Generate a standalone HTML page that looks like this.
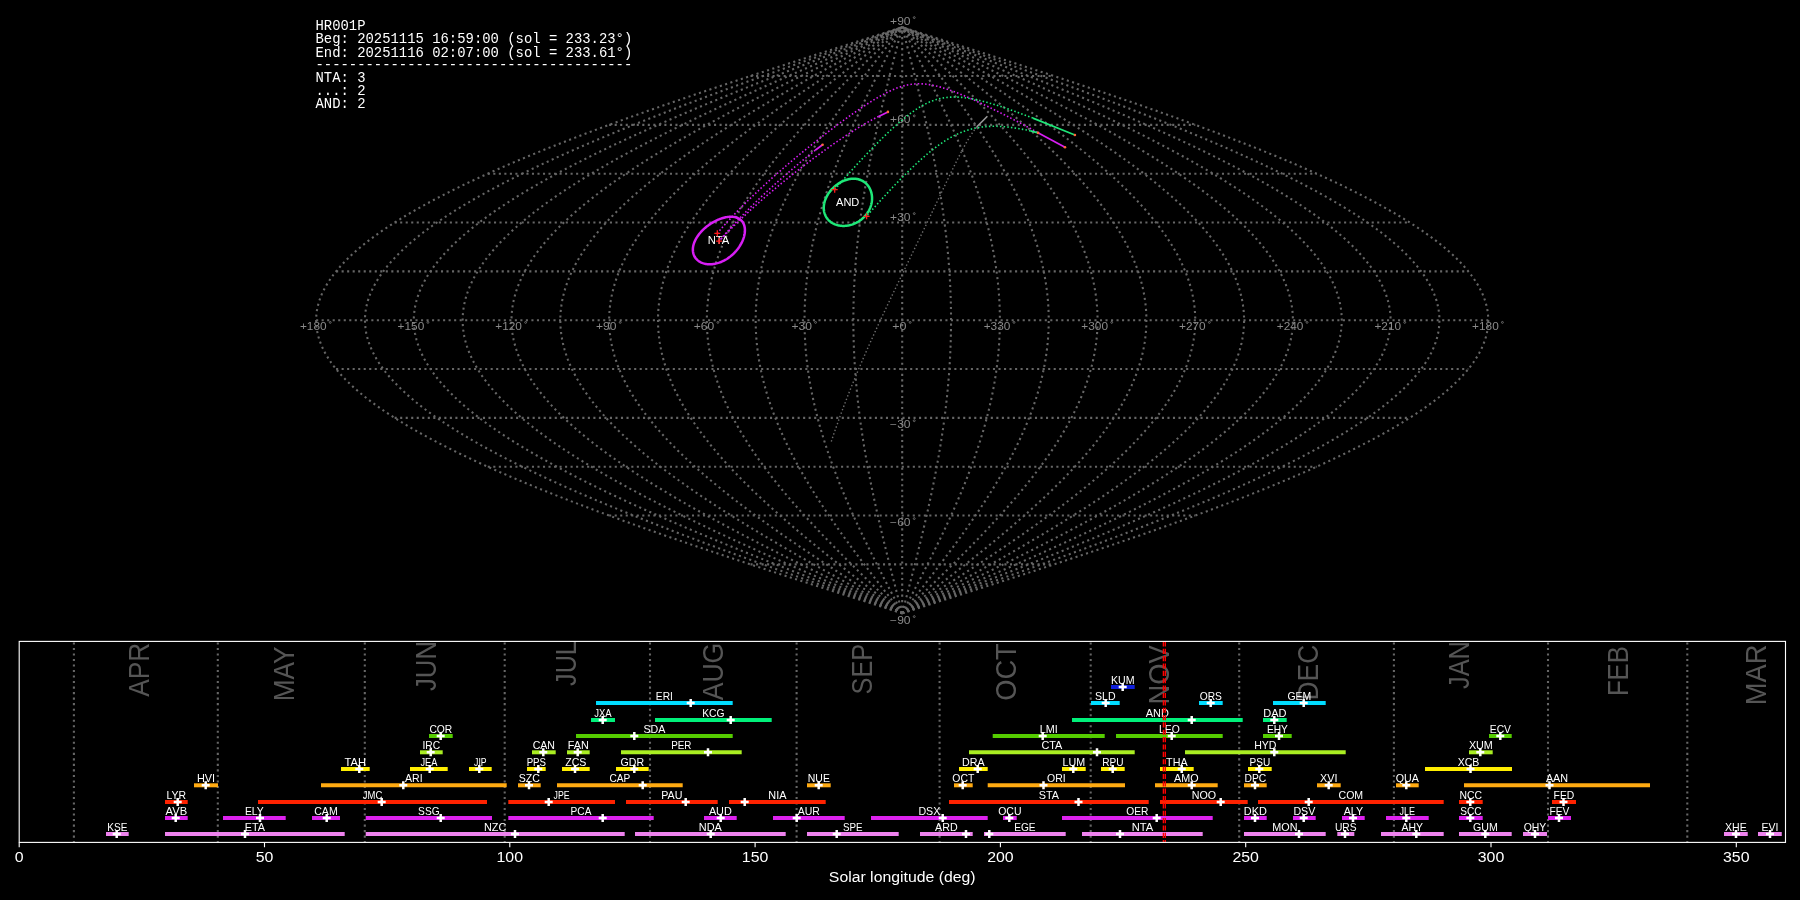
<!DOCTYPE html>
<html><head><meta charset="utf-8"><style>
html,body{margin:0;padding:0;background:#000;width:1800px;height:900px;overflow:hidden}
svg{display:block;will-change:transform}
</style></head><body>
<svg width="1800" height="900" viewBox="0 0 1800 900">
<rect width="1800" height="900" fill="#000"/>
<g fill="none" stroke="#666666" stroke-width="2.08" stroke-dasharray="2.08 3.44">
<path d="M750.51,564.40 L1053.89,564.40"/>
<path d="M609.16,515.56 L1195.24,515.56"/>
<path d="M487.78,466.72 L1316.62,466.72"/>
<path d="M394.64,417.88 L1409.76,417.88"/>
<path d="M336.09,369.04 L1468.31,369.04"/>
<path d="M316.12,320.20 L1488.28,320.20"/>
<path d="M336.09,271.36 L1468.31,271.36"/>
<path d="M394.64,222.52 L1409.76,222.52"/>
<path d="M487.78,173.68 L1316.62,173.68"/>
<path d="M609.16,124.84 L1195.24,124.84"/>
<path d="M750.51,76.00 L1053.89,76.00"/>
<path d="M902.20,613.24 L912.43,609.98 L922.65,606.73 L932.87,603.47 L943.08,600.22 L953.28,596.96 L963.46,593.70 L973.63,590.45 L983.77,587.19 L993.88,583.94 L1003.97,580.68 L1014.03,577.42 L1024.05,574.17 L1034.04,570.91 L1043.99,567.66 L1053.89,564.40 L1063.75,561.14 L1073.55,557.89 L1083.31,554.63 L1093.01,551.38 L1102.65,548.12 L1112.23,544.86 L1121.75,541.61 L1131.20,538.35 L1140.58,535.10 L1149.89,531.84 L1159.12,528.58 L1168.27,525.33 L1177.35,522.07 L1186.34,518.82 L1195.24,515.56 L1204.05,512.30 L1212.78,509.05 L1221.40,505.79 L1229.93,502.54 L1238.36,499.28 L1246.69,496.02 L1254.91,492.77 L1263.03,489.51 L1271.03,486.26 L1278.92,483.00 L1286.70,479.74 L1294.36,476.49 L1301.91,473.23 L1309.33,469.98 L1316.62,466.72 L1323.79,463.46 L1330.83,460.21 L1337.74,456.95 L1344.52,453.70 L1351.16,450.44 L1357.67,447.18 L1364.04,443.93 L1370.26,440.67 L1376.35,437.42 L1382.29,434.16 L1388.08,430.90 L1393.73,427.65 L1399.22,424.39 L1404.57,421.14 L1409.76,417.88 L1414.80,414.62 L1419.68,411.37 L1424.40,408.11 L1428.97,404.86 L1433.37,401.60 L1437.61,398.34 L1441.69,395.09 L1445.60,391.83 L1449.35,388.58 L1452.94,385.32 L1456.35,382.06 L1459.60,378.81 L1462.67,375.55 L1465.58,372.30 L1468.31,369.04 L1470.87,365.78 L1473.26,362.53 L1475.47,359.27 L1477.51,356.02 L1479.38,352.76 L1481.06,349.50 L1482.58,346.25 L1483.91,342.99 L1485.07,339.74 L1486.05,336.48 L1486.85,333.22 L1487.48,329.97 L1487.92,326.71 L1488.19,323.46 L1488.28,320.20 L1488.19,316.94 L1487.92,313.69 L1487.48,310.43 L1486.85,307.18 L1486.05,303.92 L1485.07,300.66 L1483.91,297.41 L1482.58,294.15 L1481.06,290.90 L1479.38,287.64 L1477.51,284.38 L1475.47,281.13 L1473.26,277.87 L1470.87,274.62 L1468.31,271.36 L1465.58,268.10 L1462.67,264.85 L1459.60,261.59 L1456.35,258.34 L1452.94,255.08 L1449.35,251.82 L1445.60,248.57 L1441.69,245.31 L1437.61,242.06 L1433.37,238.80 L1428.97,235.54 L1424.40,232.29 L1419.68,229.03 L1414.80,225.78 L1409.76,222.52 L1404.57,219.26 L1399.22,216.01 L1393.73,212.75 L1388.08,209.50 L1382.29,206.24 L1376.35,202.98 L1370.26,199.73 L1364.04,196.47 L1357.67,193.22 L1351.16,189.96 L1344.52,186.70 L1337.74,183.45 L1330.83,180.19 L1323.79,176.94 L1316.62,173.68 L1309.33,170.42 L1301.91,167.17 L1294.36,163.91 L1286.70,160.66 L1278.92,157.40 L1271.03,154.14 L1263.03,150.89 L1254.91,147.63 L1246.69,144.38 L1238.36,141.12 L1229.93,137.86 L1221.40,134.61 L1212.78,131.35 L1204.05,128.10 L1195.24,124.84 L1186.34,121.58 L1177.35,118.33 L1168.27,115.07 L1159.12,111.82 L1149.89,108.56 L1140.58,105.30 L1131.20,102.05 L1121.75,98.79 L1112.23,95.54 L1102.65,92.28 L1093.01,89.02 L1083.31,85.77 L1073.55,82.51 L1063.75,79.26 L1053.89,76.00 L1043.99,72.74 L1034.04,69.49 L1024.05,66.23 L1014.03,62.98 L1003.97,59.72 L993.88,56.46 L983.77,53.21 L973.63,49.95 L963.46,46.70 L953.28,43.44 L943.08,40.18 L932.87,36.93 L922.65,33.67 L912.43,30.42 L902.20,27.16"/>
<path d="M902.20,613.24 L911.58,609.98 L920.95,606.73 L930.32,603.47 L939.68,600.22 L949.02,596.96 L958.36,593.70 L967.67,590.45 L976.97,587.19 L986.24,583.94 L995.49,580.68 L1004.71,577.42 L1013.90,574.17 L1023.05,570.91 L1032.17,567.66 L1041.25,564.40 L1050.28,561.14 L1059.27,557.89 L1068.22,554.63 L1077.11,551.38 L1085.95,548.12 L1094.73,544.86 L1103.45,541.61 L1112.12,538.35 L1120.72,535.10 L1129.25,531.84 L1137.71,528.58 L1146.10,525.33 L1154.42,522.07 L1162.66,518.82 L1170.82,515.56 L1178.90,512.30 L1186.89,509.05 L1194.80,505.79 L1202.62,502.54 L1210.35,499.28 L1217.98,496.02 L1225.52,492.77 L1232.96,489.51 L1240.30,486.26 L1247.53,483.00 L1254.66,479.74 L1261.68,476.49 L1268.60,473.23 L1275.40,469.98 L1282.09,466.72 L1288.66,463.46 L1295.11,460.21 L1301.45,456.95 L1307.66,453.70 L1313.75,450.44 L1319.71,447.18 L1325.55,443.93 L1331.26,440.67 L1336.84,437.42 L1342.28,434.16 L1347.59,430.90 L1352.77,427.65 L1357.81,424.39 L1362.70,421.14 L1367.46,417.88 L1372.08,414.62 L1376.55,411.37 L1380.88,408.11 L1385.07,404.86 L1389.10,401.60 L1392.99,398.34 L1396.73,395.09 L1400.32,391.83 L1403.76,388.58 L1407.04,385.32 L1410.17,382.06 L1413.15,378.81 L1415.97,375.55 L1418.63,372.30 L1421.13,369.04 L1423.48,365.78 L1425.67,362.53 L1427.70,359.27 L1429.57,356.02 L1431.28,352.76 L1432.83,349.50 L1434.21,346.25 L1435.44,342.99 L1436.50,339.74 L1437.40,336.48 L1438.13,333.22 L1438.70,329.97 L1439.11,326.71 L1439.36,323.46 L1439.44,320.20 L1439.36,316.94 L1439.11,313.69 L1438.70,310.43 L1438.13,307.18 L1437.40,303.92 L1436.50,300.66 L1435.44,297.41 L1434.21,294.15 L1432.83,290.90 L1431.28,287.64 L1429.57,284.38 L1427.70,281.13 L1425.67,277.87 L1423.48,274.62 L1421.13,271.36 L1418.63,268.10 L1415.97,264.85 L1413.15,261.59 L1410.17,258.34 L1407.04,255.08 L1403.76,251.82 L1400.32,248.57 L1396.73,245.31 L1392.99,242.06 L1389.10,238.80 L1385.07,235.54 L1380.88,232.29 L1376.55,229.03 L1372.08,225.78 L1367.46,222.52 L1362.70,219.26 L1357.81,216.01 L1352.77,212.75 L1347.59,209.50 L1342.28,206.24 L1336.84,202.98 L1331.26,199.73 L1325.55,196.47 L1319.71,193.22 L1313.75,189.96 L1307.66,186.70 L1301.45,183.45 L1295.11,180.19 L1288.66,176.94 L1282.09,173.68 L1275.40,170.42 L1268.60,167.17 L1261.68,163.91 L1254.66,160.66 L1247.53,157.40 L1240.30,154.14 L1232.96,150.89 L1225.52,147.63 L1217.98,144.38 L1210.35,141.12 L1202.62,137.86 L1194.80,134.61 L1186.89,131.35 L1178.90,128.10 L1170.82,124.84 L1162.66,121.58 L1154.42,118.33 L1146.10,115.07 L1137.71,111.82 L1129.25,108.56 L1120.72,105.30 L1112.12,102.05 L1103.45,98.79 L1094.73,95.54 L1085.95,92.28 L1077.11,89.02 L1068.22,85.77 L1059.27,82.51 L1050.28,79.26 L1041.25,76.00 L1032.17,72.74 L1023.05,69.49 L1013.90,66.23 L1004.71,62.98 L995.49,59.72 L986.24,56.46 L976.97,53.21 L967.67,49.95 L958.36,46.70 L949.02,43.44 L939.68,40.18 L930.32,36.93 L920.95,33.67 L911.58,30.42 L902.20,27.16"/>
<path d="M902.20,613.24 L910.72,609.98 L919.24,606.73 L927.76,603.47 L936.27,600.22 L944.77,596.96 L953.25,593.70 L961.72,590.45 L970.17,587.19 L978.60,583.94 L987.01,580.68 L995.39,577.42 L1003.74,574.17 L1012.07,570.91 L1020.35,567.66 L1028.61,564.40 L1036.82,561.14 L1044.99,557.89 L1053.12,554.63 L1061.21,551.38 L1069.24,548.12 L1077.23,544.86 L1085.16,541.61 L1093.03,538.35 L1100.85,535.10 L1108.61,531.84 L1116.30,528.58 L1123.93,525.33 L1131.49,522.07 L1138.98,518.82 L1146.40,515.56 L1153.74,512.30 L1161.01,509.05 L1168.20,505.79 L1175.31,502.54 L1182.33,499.28 L1189.27,496.02 L1196.13,492.77 L1202.89,489.51 L1209.56,486.26 L1216.14,483.00 L1222.62,479.74 L1229.00,476.49 L1235.29,473.23 L1241.47,469.98 L1247.55,466.72 L1253.53,463.46 L1259.39,460.21 L1265.15,456.95 L1270.80,453.70 L1276.34,450.44 L1281.76,447.18 L1287.06,443.93 L1292.25,440.67 L1297.32,437.42 L1302.27,434.16 L1307.10,430.90 L1311.81,427.65 L1316.39,424.39 L1320.84,421.14 L1325.17,417.88 L1329.36,414.62 L1333.43,411.37 L1337.37,408.11 L1341.17,404.86 L1344.84,401.60 L1348.38,398.34 L1351.77,395.09 L1355.04,391.83 L1358.16,388.58 L1361.15,385.32 L1363.99,382.06 L1366.70,378.81 L1369.26,375.55 L1371.68,372.30 L1373.96,369.04 L1376.09,365.78 L1378.08,362.53 L1379.93,359.27 L1381.63,356.02 L1383.18,352.76 L1384.59,349.50 L1385.85,346.25 L1386.96,342.99 L1387.92,339.74 L1388.74,336.48 L1389.41,333.22 L1389.93,329.97 L1390.30,326.71 L1390.53,323.46 L1390.60,320.20 L1390.53,316.94 L1390.30,313.69 L1389.93,310.43 L1389.41,307.18 L1388.74,303.92 L1387.92,300.66 L1386.96,297.41 L1385.85,294.15 L1384.59,290.90 L1383.18,287.64 L1381.63,284.38 L1379.93,281.13 L1378.08,277.87 L1376.09,274.62 L1373.96,271.36 L1371.68,268.10 L1369.26,264.85 L1366.70,261.59 L1363.99,258.34 L1361.15,255.08 L1358.16,251.82 L1355.04,248.57 L1351.77,245.31 L1348.38,242.06 L1344.84,238.80 L1341.17,235.54 L1337.37,232.29 L1333.43,229.03 L1329.36,225.78 L1325.17,222.52 L1320.84,219.26 L1316.39,216.01 L1311.81,212.75 L1307.10,209.50 L1302.27,206.24 L1297.32,202.98 L1292.25,199.73 L1287.06,196.47 L1281.76,193.22 L1276.34,189.96 L1270.80,186.70 L1265.15,183.45 L1259.39,180.19 L1253.53,176.94 L1247.55,173.68 L1241.47,170.42 L1235.29,167.17 L1229.00,163.91 L1222.62,160.66 L1216.14,157.40 L1209.56,154.14 L1202.89,150.89 L1196.13,147.63 L1189.27,144.38 L1182.33,141.12 L1175.31,137.86 L1168.20,134.61 L1161.01,131.35 L1153.74,128.10 L1146.40,124.84 L1138.98,121.58 L1131.49,118.33 L1123.93,115.07 L1116.30,111.82 L1108.61,108.56 L1100.85,105.30 L1093.03,102.05 L1085.16,98.79 L1077.23,95.54 L1069.24,92.28 L1061.21,89.02 L1053.12,85.77 L1044.99,82.51 L1036.82,79.26 L1028.61,76.00 L1020.35,72.74 L1012.07,69.49 L1003.74,66.23 L995.39,62.98 L987.01,59.72 L978.60,56.46 L970.17,53.21 L961.72,49.95 L953.25,46.70 L944.77,43.44 L936.27,40.18 L927.76,36.93 L919.24,33.67 L910.72,30.42 L902.20,27.16"/>
<path d="M902.20,613.24 L909.87,609.98 L917.54,606.73 L925.20,603.47 L932.86,600.22 L940.51,596.96 L948.15,593.70 L955.77,590.45 L963.37,587.19 L970.96,583.94 L978.53,580.68 L986.07,577.42 L993.59,574.17 L1001.08,570.91 L1008.54,567.66 L1015.97,564.40 L1023.36,561.14 L1030.71,557.89 L1038.03,554.63 L1045.31,551.38 L1052.54,548.12 L1059.72,544.86 L1066.86,541.61 L1073.95,538.35 L1080.99,535.10 L1087.97,531.84 L1094.89,528.58 L1101.76,525.33 L1108.56,522.07 L1115.30,518.82 L1121.98,515.56 L1128.59,512.30 L1135.13,509.05 L1141.60,505.79 L1148.00,502.54 L1154.32,499.28 L1160.57,496.02 L1166.73,492.77 L1172.82,489.51 L1178.82,486.26 L1184.74,483.00 L1190.58,479.74 L1196.32,476.49 L1201.98,473.23 L1207.54,469.98 L1213.02,466.72 L1218.39,463.46 L1223.67,460.21 L1228.86,456.95 L1233.94,453.70 L1238.92,450.44 L1243.80,447.18 L1248.58,443.93 L1253.25,440.67 L1257.81,437.42 L1262.27,434.16 L1266.61,430.90 L1270.85,427.65 L1274.97,424.39 L1278.98,421.14 L1282.87,417.88 L1286.65,414.62 L1290.31,411.37 L1293.85,408.11 L1297.27,404.86 L1300.58,401.60 L1303.76,398.34 L1306.82,395.09 L1309.75,391.83 L1312.56,388.58 L1315.25,385.32 L1317.81,382.06 L1320.25,378.81 L1322.55,375.55 L1324.73,372.30 L1326.78,369.04 L1328.70,365.78 L1330.49,362.53 L1332.15,359.27 L1333.68,356.02 L1335.08,352.76 L1336.35,349.50 L1337.48,346.25 L1338.48,342.99 L1339.35,339.74 L1340.09,336.48 L1340.69,333.22 L1341.16,329.97 L1341.49,326.71 L1341.69,323.46 L1341.76,320.20 L1341.69,316.94 L1341.49,313.69 L1341.16,310.43 L1340.69,307.18 L1340.09,303.92 L1339.35,300.66 L1338.48,297.41 L1337.48,294.15 L1336.35,290.90 L1335.08,287.64 L1333.68,284.38 L1332.15,281.13 L1330.49,277.87 L1328.70,274.62 L1326.78,271.36 L1324.73,268.10 L1322.55,264.85 L1320.25,261.59 L1317.81,258.34 L1315.25,255.08 L1312.56,251.82 L1309.75,248.57 L1306.82,245.31 L1303.76,242.06 L1300.58,238.80 L1297.27,235.54 L1293.85,232.29 L1290.31,229.03 L1286.65,225.78 L1282.87,222.52 L1278.98,219.26 L1274.97,216.01 L1270.85,212.75 L1266.61,209.50 L1262.27,206.24 L1257.81,202.98 L1253.25,199.73 L1248.58,196.47 L1243.80,193.22 L1238.92,189.96 L1233.94,186.70 L1228.86,183.45 L1223.67,180.19 L1218.39,176.94 L1213.02,173.68 L1207.54,170.42 L1201.98,167.17 L1196.32,163.91 L1190.58,160.66 L1184.74,157.40 L1178.82,154.14 L1172.82,150.89 L1166.73,147.63 L1160.57,144.38 L1154.32,141.12 L1148.00,137.86 L1141.60,134.61 L1135.13,131.35 L1128.59,128.10 L1121.98,124.84 L1115.30,121.58 L1108.56,118.33 L1101.76,115.07 L1094.89,111.82 L1087.97,108.56 L1080.99,105.30 L1073.95,102.05 L1066.86,98.79 L1059.72,95.54 L1052.54,92.28 L1045.31,89.02 L1038.03,85.77 L1030.71,82.51 L1023.36,79.26 L1015.97,76.00 L1008.54,72.74 L1001.08,69.49 L993.59,66.23 L986.07,62.98 L978.53,59.72 L970.96,56.46 L963.37,53.21 L955.77,49.95 L948.15,46.70 L940.51,43.44 L932.86,40.18 L925.20,36.93 L917.54,33.67 L909.87,30.42 L902.20,27.16"/>
<path d="M902.20,613.24 L909.02,609.98 L915.84,606.73 L922.65,603.47 L929.46,600.22 L936.25,596.96 L943.04,593.70 L949.82,590.45 L956.58,587.19 L963.32,583.94 L970.05,580.68 L976.75,577.42 L983.44,574.17 L990.09,570.91 L996.72,567.66 L1003.33,564.40 L1009.90,561.14 L1016.44,557.89 L1022.94,554.63 L1029.41,551.38 L1035.83,548.12 L1042.22,544.86 L1048.57,541.61 L1054.87,538.35 L1061.12,535.10 L1067.33,531.84 L1073.48,528.58 L1079.58,525.33 L1085.63,522.07 L1091.62,518.82 L1097.56,515.56 L1103.44,512.30 L1109.25,509.05 L1115.00,505.79 L1120.69,502.54 L1126.31,499.28 L1131.86,496.02 L1137.34,492.77 L1142.75,489.51 L1148.09,486.26 L1153.35,483.00 L1158.54,479.74 L1163.64,476.49 L1168.67,473.23 L1173.62,469.98 L1178.48,466.72 L1183.26,463.46 L1187.95,460.21 L1192.56,456.95 L1197.08,453.70 L1201.51,450.44 L1205.85,447.18 L1210.09,443.93 L1214.24,440.67 L1218.30,437.42 L1222.26,434.16 L1226.12,430.90 L1229.89,427.65 L1233.55,424.39 L1237.11,421.14 L1240.57,417.88 L1243.93,414.62 L1247.19,411.37 L1250.33,408.11 L1253.38,404.86 L1256.31,401.60 L1259.14,398.34 L1261.86,395.09 L1264.47,391.83 L1266.97,388.58 L1269.36,385.32 L1271.63,382.06 L1273.80,378.81 L1275.85,375.55 L1277.78,372.30 L1279.61,369.04 L1281.31,365.78 L1282.91,362.53 L1284.38,359.27 L1285.74,356.02 L1286.98,352.76 L1288.11,349.50 L1289.12,346.25 L1290.01,342.99 L1290.78,339.74 L1291.43,336.48 L1291.97,333.22 L1292.38,329.97 L1292.68,326.71 L1292.86,323.46 L1292.92,320.20 L1292.86,316.94 L1292.68,313.69 L1292.38,310.43 L1291.97,307.18 L1291.43,303.92 L1290.78,300.66 L1290.01,297.41 L1289.12,294.15 L1288.11,290.90 L1286.98,287.64 L1285.74,284.38 L1284.38,281.13 L1282.91,277.87 L1281.31,274.62 L1279.61,271.36 L1277.78,268.10 L1275.85,264.85 L1273.80,261.59 L1271.63,258.34 L1269.36,255.08 L1266.97,251.82 L1264.47,248.57 L1261.86,245.31 L1259.14,242.06 L1256.31,238.80 L1253.38,235.54 L1250.33,232.29 L1247.19,229.03 L1243.93,225.78 L1240.57,222.52 L1237.11,219.26 L1233.55,216.01 L1229.89,212.75 L1226.12,209.50 L1222.26,206.24 L1218.30,202.98 L1214.24,199.73 L1210.09,196.47 L1205.85,193.22 L1201.51,189.96 L1197.08,186.70 L1192.56,183.45 L1187.95,180.19 L1183.26,176.94 L1178.48,173.68 L1173.62,170.42 L1168.67,167.17 L1163.64,163.91 L1158.54,160.66 L1153.35,157.40 L1148.09,154.14 L1142.75,150.89 L1137.34,147.63 L1131.86,144.38 L1126.31,141.12 L1120.69,137.86 L1115.00,134.61 L1109.25,131.35 L1103.44,128.10 L1097.56,124.84 L1091.62,121.58 L1085.63,118.33 L1079.58,115.07 L1073.48,111.82 L1067.33,108.56 L1061.12,105.30 L1054.87,102.05 L1048.57,98.79 L1042.22,95.54 L1035.83,92.28 L1029.41,89.02 L1022.94,85.77 L1016.44,82.51 L1009.90,79.26 L1003.33,76.00 L996.72,72.74 L990.09,69.49 L983.44,66.23 L976.75,62.98 L970.05,59.72 L963.32,56.46 L956.58,53.21 L949.82,49.95 L943.04,46.70 L936.25,43.44 L929.46,40.18 L922.65,36.93 L915.84,33.67 L909.02,30.42 L902.20,27.16"/>
<path d="M902.20,613.24 L908.17,609.98 L914.13,606.73 L920.09,603.47 L926.05,600.22 L932.00,596.96 L937.94,593.70 L943.86,590.45 L949.78,587.19 L955.68,583.94 L961.57,580.68 L967.43,577.42 L973.28,574.17 L979.11,570.91 L984.91,567.66 L990.69,564.40 L996.43,561.14 L1002.16,557.89 L1007.85,554.63 L1013.51,551.38 L1019.13,548.12 L1024.72,544.86 L1030.27,541.61 L1035.78,538.35 L1041.26,535.10 L1046.68,531.84 L1052.07,528.58 L1057.41,525.33 L1062.70,522.07 L1067.95,518.82 L1073.14,515.56 L1078.28,512.30 L1083.37,509.05 L1088.40,505.79 L1093.38,502.54 L1098.29,499.28 L1103.15,496.02 L1107.95,492.77 L1112.68,489.51 L1117.35,486.26 L1121.96,483.00 L1126.49,479.74 L1130.96,476.49 L1135.36,473.23 L1139.69,469.98 L1143.95,466.72 L1148.13,463.46 L1152.24,460.21 L1156.27,456.95 L1160.22,453.70 L1164.10,450.44 L1167.89,447.18 L1171.61,443.93 L1175.24,440.67 L1178.79,437.42 L1182.25,434.16 L1185.63,430.90 L1188.92,427.65 L1192.13,424.39 L1195.25,421.14 L1198.28,417.88 L1201.21,414.62 L1204.06,411.37 L1206.82,408.11 L1209.48,404.86 L1212.05,401.60 L1214.52,398.34 L1216.90,395.09 L1219.19,391.83 L1221.37,388.58 L1223.46,385.32 L1225.45,382.06 L1227.35,378.81 L1229.14,375.55 L1230.84,372.30 L1232.43,369.04 L1233.92,365.78 L1235.32,362.53 L1236.61,359.27 L1237.80,356.02 L1238.89,352.76 L1239.87,349.50 L1240.75,346.25 L1241.53,342.99 L1242.21,339.74 L1242.78,336.48 L1243.25,333.22 L1243.61,329.97 L1243.87,326.71 L1244.03,323.46 L1244.08,320.20 L1244.03,316.94 L1243.87,313.69 L1243.61,310.43 L1243.25,307.18 L1242.78,303.92 L1242.21,300.66 L1241.53,297.41 L1240.75,294.15 L1239.87,290.90 L1238.89,287.64 L1237.80,284.38 L1236.61,281.13 L1235.32,277.87 L1233.92,274.62 L1232.43,271.36 L1230.84,268.10 L1229.14,264.85 L1227.35,261.59 L1225.45,258.34 L1223.46,255.08 L1221.37,251.82 L1219.19,248.57 L1216.90,245.31 L1214.52,242.06 L1212.05,238.80 L1209.48,235.54 L1206.82,232.29 L1204.06,229.03 L1201.21,225.78 L1198.28,222.52 L1195.25,219.26 L1192.13,216.01 L1188.92,212.75 L1185.63,209.50 L1182.25,206.24 L1178.79,202.98 L1175.24,199.73 L1171.61,196.47 L1167.89,193.22 L1164.10,189.96 L1160.22,186.70 L1156.27,183.45 L1152.24,180.19 L1148.13,176.94 L1143.95,173.68 L1139.69,170.42 L1135.36,167.17 L1130.96,163.91 L1126.49,160.66 L1121.96,157.40 L1117.35,154.14 L1112.68,150.89 L1107.95,147.63 L1103.15,144.38 L1098.29,141.12 L1093.38,137.86 L1088.40,134.61 L1083.37,131.35 L1078.28,128.10 L1073.14,124.84 L1067.95,121.58 L1062.70,118.33 L1057.41,115.07 L1052.07,111.82 L1046.68,108.56 L1041.26,105.30 L1035.78,102.05 L1030.27,98.79 L1024.72,95.54 L1019.13,92.28 L1013.51,89.02 L1007.85,85.77 L1002.16,82.51 L996.43,79.26 L990.69,76.00 L984.91,72.74 L979.11,69.49 L973.28,66.23 L967.43,62.98 L961.57,59.72 L955.68,56.46 L949.78,53.21 L943.86,49.95 L937.94,46.70 L932.00,43.44 L926.05,40.18 L920.09,36.93 L914.13,33.67 L908.17,30.42 L902.20,27.16"/>
<path d="M902.20,613.24 L907.31,609.98 L912.43,606.73 L917.54,603.47 L922.64,600.22 L927.74,596.96 L932.83,593.70 L937.91,590.45 L942.98,587.19 L948.04,583.94 L953.09,580.68 L958.11,577.42 L963.13,574.17 L968.12,570.91 L973.09,567.66 L978.04,564.40 L982.97,561.14 L987.88,557.89 L992.75,554.63 L997.60,551.38 L1002.43,548.12 L1007.22,544.86 L1011.97,541.61 L1016.70,538.35 L1021.39,535.10 L1026.04,531.84 L1030.66,528.58 L1035.24,525.33 L1039.77,522.07 L1044.27,518.82 L1048.72,515.56 L1053.13,512.30 L1057.49,509.05 L1061.80,505.79 L1066.07,502.54 L1070.28,499.28 L1074.44,496.02 L1078.56,492.77 L1082.61,489.51 L1086.62,486.26 L1090.56,483.00 L1094.45,479.74 L1098.28,476.49 L1102.05,473.23 L1105.76,469.98 L1109.41,466.72 L1113.00,463.46 L1116.52,460.21 L1119.97,456.95 L1123.36,453.70 L1126.68,450.44 L1129.93,447.18 L1133.12,443.93 L1136.23,440.67 L1139.27,437.42 L1142.24,434.16 L1145.14,430.90 L1147.96,427.65 L1150.71,424.39 L1153.38,421.14 L1155.98,417.88 L1158.50,414.62 L1160.94,411.37 L1163.30,408.11 L1165.58,404.86 L1167.78,401.60 L1169.91,398.34 L1171.94,395.09 L1173.90,391.83 L1175.78,388.58 L1177.57,385.32 L1179.27,382.06 L1180.90,378.81 L1182.44,375.55 L1183.89,372.30 L1185.25,369.04 L1186.54,365.78 L1187.73,362.53 L1188.84,359.27 L1189.86,356.02 L1190.79,352.76 L1191.63,349.50 L1192.39,346.25 L1193.06,342.99 L1193.63,339.74 L1194.12,336.48 L1194.53,333.22 L1194.84,329.97 L1195.06,326.71 L1195.20,323.46 L1195.24,320.20 L1195.20,316.94 L1195.06,313.69 L1194.84,310.43 L1194.53,307.18 L1194.12,303.92 L1193.63,300.66 L1193.06,297.41 L1192.39,294.15 L1191.63,290.90 L1190.79,287.64 L1189.86,284.38 L1188.84,281.13 L1187.73,277.87 L1186.54,274.62 L1185.25,271.36 L1183.89,268.10 L1182.44,264.85 L1180.90,261.59 L1179.27,258.34 L1177.57,255.08 L1175.78,251.82 L1173.90,248.57 L1171.94,245.31 L1169.91,242.06 L1167.78,238.80 L1165.58,235.54 L1163.30,232.29 L1160.94,229.03 L1158.50,225.78 L1155.98,222.52 L1153.38,219.26 L1150.71,216.01 L1147.96,212.75 L1145.14,209.50 L1142.24,206.24 L1139.27,202.98 L1136.23,199.73 L1133.12,196.47 L1129.93,193.22 L1126.68,189.96 L1123.36,186.70 L1119.97,183.45 L1116.52,180.19 L1113.00,176.94 L1109.41,173.68 L1105.76,170.42 L1102.05,167.17 L1098.28,163.91 L1094.45,160.66 L1090.56,157.40 L1086.62,154.14 L1082.61,150.89 L1078.56,147.63 L1074.44,144.38 L1070.28,141.12 L1066.07,137.86 L1061.80,134.61 L1057.49,131.35 L1053.13,128.10 L1048.72,124.84 L1044.27,121.58 L1039.77,118.33 L1035.24,115.07 L1030.66,111.82 L1026.04,108.56 L1021.39,105.30 L1016.70,102.05 L1011.97,98.79 L1007.22,95.54 L1002.43,92.28 L997.60,89.02 L992.75,85.77 L987.88,82.51 L982.97,79.26 L978.04,76.00 L973.09,72.74 L968.12,69.49 L963.13,66.23 L958.11,62.98 L953.09,59.72 L948.04,56.46 L942.98,53.21 L937.91,49.95 L932.83,46.70 L927.74,43.44 L922.64,40.18 L917.54,36.93 L912.43,33.67 L907.31,30.42 L902.20,27.16"/>
<path d="M902.20,613.24 L906.46,609.98 L910.72,606.73 L914.98,603.47 L919.23,600.22 L923.48,596.96 L927.73,593.70 L931.96,590.45 L936.19,587.19 L940.40,583.94 L944.60,580.68 L948.80,577.42 L952.97,574.17 L957.13,570.91 L961.28,567.66 L965.40,564.40 L969.51,561.14 L973.60,557.89 L977.66,554.63 L981.70,551.38 L985.72,548.12 L989.71,544.86 L993.68,541.61 L997.62,538.35 L1001.53,535.10 L1005.40,531.84 L1009.25,528.58 L1013.06,525.33 L1016.84,522.07 L1020.59,518.82 L1024.30,515.56 L1027.97,512.30 L1031.61,509.05 L1035.20,505.79 L1038.75,502.54 L1042.27,499.28 L1045.74,496.02 L1049.16,492.77 L1052.54,489.51 L1055.88,486.26 L1059.17,483.00 L1062.41,479.74 L1065.60,476.49 L1068.74,473.23 L1071.84,469.98 L1074.88,466.72 L1077.86,463.46 L1080.80,460.21 L1083.68,456.95 L1086.50,453.70 L1089.27,450.44 L1091.98,447.18 L1094.63,443.93 L1097.23,440.67 L1099.76,437.42 L1102.24,434.16 L1104.65,430.90 L1107.00,427.65 L1109.29,424.39 L1111.52,421.14 L1113.68,417.88 L1115.78,414.62 L1117.82,411.37 L1119.78,408.11 L1121.69,404.86 L1123.52,401.60 L1125.29,398.34 L1126.99,395.09 L1128.62,391.83 L1130.18,388.58 L1131.67,385.32 L1133.10,382.06 L1134.45,378.81 L1135.73,375.55 L1136.94,372.30 L1138.08,369.04 L1139.15,365.78 L1140.14,362.53 L1141.06,359.27 L1141.91,356.02 L1142.69,352.76 L1143.39,349.50 L1144.02,346.25 L1144.58,342.99 L1145.06,339.74 L1145.47,336.48 L1145.81,333.22 L1146.07,329.97 L1146.25,326.71 L1146.36,323.46 L1146.40,320.20 L1146.36,316.94 L1146.25,313.69 L1146.07,310.43 L1145.81,307.18 L1145.47,303.92 L1145.06,300.66 L1144.58,297.41 L1144.02,294.15 L1143.39,290.90 L1142.69,287.64 L1141.91,284.38 L1141.06,281.13 L1140.14,277.87 L1139.15,274.62 L1138.08,271.36 L1136.94,268.10 L1135.73,264.85 L1134.45,261.59 L1133.10,258.34 L1131.67,255.08 L1130.18,251.82 L1128.62,248.57 L1126.99,245.31 L1125.29,242.06 L1123.52,238.80 L1121.69,235.54 L1119.78,232.29 L1117.82,229.03 L1115.78,225.78 L1113.68,222.52 L1111.52,219.26 L1109.29,216.01 L1107.00,212.75 L1104.65,209.50 L1102.24,206.24 L1099.76,202.98 L1097.23,199.73 L1094.63,196.47 L1091.98,193.22 L1089.27,189.96 L1086.50,186.70 L1083.68,183.45 L1080.80,180.19 L1077.86,176.94 L1074.88,173.68 L1071.84,170.42 L1068.74,167.17 L1065.60,163.91 L1062.41,160.66 L1059.17,157.40 L1055.88,154.14 L1052.54,150.89 L1049.16,147.63 L1045.74,144.38 L1042.27,141.12 L1038.75,137.86 L1035.20,134.61 L1031.61,131.35 L1027.97,128.10 L1024.30,124.84 L1020.59,121.58 L1016.84,118.33 L1013.06,115.07 L1009.25,111.82 L1005.40,108.56 L1001.53,105.30 L997.62,102.05 L993.68,98.79 L989.71,95.54 L985.72,92.28 L981.70,89.02 L977.66,85.77 L973.60,82.51 L969.51,79.26 L965.40,76.00 L961.28,72.74 L957.13,69.49 L952.97,66.23 L948.80,62.98 L944.60,59.72 L940.40,56.46 L936.19,53.21 L931.96,49.95 L927.73,46.70 L923.48,43.44 L919.23,40.18 L914.98,36.93 L910.72,33.67 L906.46,30.42 L902.20,27.16"/>
<path d="M902.20,613.24 L905.61,609.98 L909.02,606.73 L912.42,603.47 L915.83,600.22 L919.23,596.96 L922.62,593.70 L926.01,590.45 L929.39,587.19 L932.76,583.94 L936.12,580.68 L939.48,577.42 L942.82,574.17 L946.15,570.91 L949.46,567.66 L952.76,564.40 L956.05,561.14 L959.32,557.89 L962.57,554.63 L965.80,551.38 L969.02,548.12 L972.21,544.86 L975.38,541.61 L978.53,538.35 L981.66,535.10 L984.76,531.84 L987.84,528.58 L990.89,525.33 L993.92,522.07 L996.91,518.82 L999.88,515.56 L1002.82,512.30 L1005.73,509.05 L1008.60,505.79 L1011.44,502.54 L1014.25,499.28 L1017.03,496.02 L1019.77,492.77 L1022.48,489.51 L1025.14,486.26 L1027.77,483.00 L1030.37,479.74 L1032.92,476.49 L1035.44,473.23 L1037.91,469.98 L1040.34,466.72 L1042.73,463.46 L1045.08,460.21 L1047.38,456.95 L1049.64,453.70 L1051.85,450.44 L1054.02,447.18 L1056.15,443.93 L1058.22,440.67 L1060.25,437.42 L1062.23,434.16 L1064.16,430.90 L1066.04,427.65 L1067.87,424.39 L1069.66,421.14 L1071.39,417.88 L1073.07,414.62 L1074.69,411.37 L1076.27,408.11 L1077.79,404.86 L1079.26,401.60 L1080.67,398.34 L1082.03,395.09 L1083.33,391.83 L1084.58,388.58 L1085.78,385.32 L1086.92,382.06 L1088.00,378.81 L1089.02,375.55 L1089.99,372.30 L1090.90,369.04 L1091.76,365.78 L1092.55,362.53 L1093.29,359.27 L1093.97,356.02 L1094.59,352.76 L1095.15,349.50 L1095.66,346.25 L1096.10,342.99 L1096.49,339.74 L1096.82,336.48 L1097.08,333.22 L1097.29,329.97 L1097.44,326.71 L1097.53,323.46 L1097.56,320.20 L1097.53,316.94 L1097.44,313.69 L1097.29,310.43 L1097.08,307.18 L1096.82,303.92 L1096.49,300.66 L1096.10,297.41 L1095.66,294.15 L1095.15,290.90 L1094.59,287.64 L1093.97,284.38 L1093.29,281.13 L1092.55,277.87 L1091.76,274.62 L1090.90,271.36 L1089.99,268.10 L1089.02,264.85 L1088.00,261.59 L1086.92,258.34 L1085.78,255.08 L1084.58,251.82 L1083.33,248.57 L1082.03,245.31 L1080.67,242.06 L1079.26,238.80 L1077.79,235.54 L1076.27,232.29 L1074.69,229.03 L1073.07,225.78 L1071.39,222.52 L1069.66,219.26 L1067.87,216.01 L1066.04,212.75 L1064.16,209.50 L1062.23,206.24 L1060.25,202.98 L1058.22,199.73 L1056.15,196.47 L1054.02,193.22 L1051.85,189.96 L1049.64,186.70 L1047.38,183.45 L1045.08,180.19 L1042.73,176.94 L1040.34,173.68 L1037.91,170.42 L1035.44,167.17 L1032.92,163.91 L1030.37,160.66 L1027.77,157.40 L1025.14,154.14 L1022.48,150.89 L1019.77,147.63 L1017.03,144.38 L1014.25,141.12 L1011.44,137.86 L1008.60,134.61 L1005.73,131.35 L1002.82,128.10 L999.88,124.84 L996.91,121.58 L993.92,118.33 L990.89,115.07 L987.84,111.82 L984.76,108.56 L981.66,105.30 L978.53,102.05 L975.38,98.79 L972.21,95.54 L969.02,92.28 L965.80,89.02 L962.57,85.77 L959.32,82.51 L956.05,79.26 L952.76,76.00 L949.46,72.74 L946.15,69.49 L942.82,66.23 L939.48,62.98 L936.12,59.72 L932.76,56.46 L929.39,53.21 L926.01,49.95 L922.62,46.70 L919.23,43.44 L915.83,40.18 L912.42,36.93 L909.02,33.67 L905.61,30.42 L902.20,27.16"/>
<path d="M902.20,613.24 L904.76,609.98 L907.31,606.73 L909.87,603.47 L912.42,600.22 L914.97,596.96 L917.52,593.70 L920.06,590.45 L922.59,587.19 L925.12,583.94 L927.64,580.68 L930.16,577.42 L932.66,574.17 L935.16,570.91 L937.65,567.66 L940.12,564.40 L942.59,561.14 L945.04,557.89 L947.48,554.63 L949.90,551.38 L952.31,548.12 L954.71,544.86 L957.09,541.61 L959.45,538.35 L961.80,535.10 L964.12,531.84 L966.43,528.58 L968.72,525.33 L970.99,522.07 L973.23,518.82 L975.46,515.56 L977.66,512.30 L979.84,509.05 L982.00,505.79 L984.13,502.54 L986.24,499.28 L988.32,496.02 L990.38,492.77 L992.41,489.51 L994.41,486.26 L996.38,483.00 L998.33,479.74 L1000.24,476.49 L1002.13,473.23 L1003.98,469.98 L1005.81,466.72 L1007.60,463.46 L1009.36,460.21 L1011.09,456.95 L1012.78,453.70 L1014.44,450.44 L1016.07,447.18 L1017.66,443.93 L1019.22,440.67 L1020.74,437.42 L1022.22,434.16 L1023.67,430.90 L1025.08,427.65 L1026.46,424.39 L1027.79,421.14 L1029.09,417.88 L1030.35,414.62 L1031.57,411.37 L1032.75,408.11 L1033.89,404.86 L1034.99,401.60 L1036.05,398.34 L1037.07,395.09 L1038.05,391.83 L1038.99,388.58 L1039.88,385.32 L1040.74,382.06 L1041.55,378.81 L1042.32,375.55 L1043.04,372.30 L1043.73,369.04 L1044.37,365.78 L1044.96,362.53 L1045.52,359.27 L1046.03,356.02 L1046.49,352.76 L1046.92,349.50 L1047.29,346.25 L1047.63,342.99 L1047.92,339.74 L1048.16,336.48 L1048.36,333.22 L1048.52,329.97 L1048.63,326.71 L1048.70,323.46 L1048.72,320.20 L1048.70,316.94 L1048.63,313.69 L1048.52,310.43 L1048.36,307.18 L1048.16,303.92 L1047.92,300.66 L1047.63,297.41 L1047.29,294.15 L1046.92,290.90 L1046.49,287.64 L1046.03,284.38 L1045.52,281.13 L1044.96,277.87 L1044.37,274.62 L1043.73,271.36 L1043.04,268.10 L1042.32,264.85 L1041.55,261.59 L1040.74,258.34 L1039.88,255.08 L1038.99,251.82 L1038.05,248.57 L1037.07,245.31 L1036.05,242.06 L1034.99,238.80 L1033.89,235.54 L1032.75,232.29 L1031.57,229.03 L1030.35,225.78 L1029.09,222.52 L1027.79,219.26 L1026.46,216.01 L1025.08,212.75 L1023.67,209.50 L1022.22,206.24 L1020.74,202.98 L1019.22,199.73 L1017.66,196.47 L1016.07,193.22 L1014.44,189.96 L1012.78,186.70 L1011.09,183.45 L1009.36,180.19 L1007.60,176.94 L1005.81,173.68 L1003.98,170.42 L1002.13,167.17 L1000.24,163.91 L998.33,160.66 L996.38,157.40 L994.41,154.14 L992.41,150.89 L990.38,147.63 L988.32,144.38 L986.24,141.12 L984.13,137.86 L982.00,134.61 L979.84,131.35 L977.66,128.10 L975.46,124.84 L973.23,121.58 L970.99,118.33 L968.72,115.07 L966.43,111.82 L964.12,108.56 L961.80,105.30 L959.45,102.05 L957.09,98.79 L954.71,95.54 L952.31,92.28 L949.90,89.02 L947.48,85.77 L945.04,82.51 L942.59,79.26 L940.12,76.00 L937.65,72.74 L935.16,69.49 L932.66,66.23 L930.16,62.98 L927.64,59.72 L925.12,56.46 L922.59,53.21 L920.06,49.95 L917.52,46.70 L914.97,43.44 L912.42,40.18 L909.87,36.93 L907.31,33.67 L904.76,30.42 L902.20,27.16"/>
<path d="M902.20,613.24 L903.90,609.98 L905.61,606.73 L907.31,603.47 L909.01,600.22 L910.71,596.96 L912.41,593.70 L914.10,590.45 L915.79,587.19 L917.48,583.94 L919.16,580.68 L920.84,577.42 L922.51,574.17 L924.17,570.91 L925.83,567.66 L927.48,564.40 L929.12,561.14 L930.76,557.89 L932.38,554.63 L934.00,551.38 L935.61,548.12 L937.21,544.86 L938.79,541.61 L940.37,538.35 L941.93,535.10 L943.48,531.84 L945.02,528.58 L946.55,525.33 L948.06,522.07 L949.56,518.82 L951.04,515.56 L952.51,512.30 L953.96,509.05 L955.40,505.79 L956.82,502.54 L958.23,499.28 L959.61,496.02 L960.99,492.77 L962.34,489.51 L963.67,486.26 L964.99,483.00 L966.28,479.74 L967.56,476.49 L968.82,473.23 L970.05,469.98 L971.27,466.72 L972.47,463.46 L973.64,460.21 L974.79,456.95 L975.92,453.70 L977.03,450.44 L978.11,447.18 L979.17,443.93 L980.21,440.67 L981.22,437.42 L982.21,434.16 L983.18,430.90 L984.12,427.65 L985.04,424.39 L985.93,421.14 L986.79,417.88 L987.63,414.62 L988.45,411.37 L989.23,408.11 L989.99,404.86 L990.73,401.60 L991.44,398.34 L992.11,395.09 L992.77,391.83 L993.39,388.58 L993.99,385.32 L994.56,382.06 L995.10,378.81 L995.61,375.55 L996.10,372.30 L996.55,369.04 L996.98,365.78 L997.38,362.53 L997.75,359.27 L998.09,356.02 L998.40,352.76 L998.68,349.50 L998.93,346.25 L999.15,342.99 L999.34,339.74 L999.51,336.48 L999.64,333.22 L999.75,329.97 L999.82,326.71 L999.87,323.46 L999.88,320.20 L999.87,316.94 L999.82,313.69 L999.75,310.43 L999.64,307.18 L999.51,303.92 L999.34,300.66 L999.15,297.41 L998.93,294.15 L998.68,290.90 L998.40,287.64 L998.09,284.38 L997.75,281.13 L997.38,277.87 L996.98,274.62 L996.55,271.36 L996.10,268.10 L995.61,264.85 L995.10,261.59 L994.56,258.34 L993.99,255.08 L993.39,251.82 L992.77,248.57 L992.11,245.31 L991.44,242.06 L990.73,238.80 L989.99,235.54 L989.23,232.29 L988.45,229.03 L987.63,225.78 L986.79,222.52 L985.93,219.26 L985.04,216.01 L984.12,212.75 L983.18,209.50 L982.21,206.24 L981.22,202.98 L980.21,199.73 L979.17,196.47 L978.11,193.22 L977.03,189.96 L975.92,186.70 L974.79,183.45 L973.64,180.19 L972.47,176.94 L971.27,173.68 L970.05,170.42 L968.82,167.17 L967.56,163.91 L966.28,160.66 L964.99,157.40 L963.67,154.14 L962.34,150.89 L960.99,147.63 L959.61,144.38 L958.23,141.12 L956.82,137.86 L955.40,134.61 L953.96,131.35 L952.51,128.10 L951.04,124.84 L949.56,121.58 L948.06,118.33 L946.55,115.07 L945.02,111.82 L943.48,108.56 L941.93,105.30 L940.37,102.05 L938.79,98.79 L937.21,95.54 L935.61,92.28 L934.00,89.02 L932.38,85.77 L930.76,82.51 L929.12,79.26 L927.48,76.00 L925.83,72.74 L924.17,69.49 L922.51,66.23 L920.84,62.98 L919.16,59.72 L917.48,56.46 L915.79,53.21 L914.10,49.95 L912.41,46.70 L910.71,43.44 L909.01,40.18 L907.31,36.93 L905.61,33.67 L903.90,30.42 L902.20,27.16"/>
<path d="M902.20,613.24 L903.05,609.98 L903.90,606.73 L904.76,603.47 L905.61,600.22 L906.46,596.96 L907.31,593.70 L908.15,590.45 L909.00,587.19 L909.84,583.94 L910.68,580.68 L911.52,577.42 L912.35,574.17 L913.19,570.91 L914.02,567.66 L914.84,564.40 L915.66,561.14 L916.48,557.89 L917.29,554.63 L918.10,551.38 L918.90,548.12 L919.70,544.86 L920.50,541.61 L921.28,538.35 L922.07,535.10 L922.84,531.84 L923.61,528.58 L924.37,525.33 L925.13,522.07 L925.88,518.82 L926.62,515.56 L927.35,512.30 L928.08,509.05 L928.80,505.79 L929.51,502.54 L930.21,499.28 L930.91,496.02 L931.59,492.77 L932.27,489.51 L932.94,486.26 L933.59,483.00 L934.24,479.74 L934.88,476.49 L935.51,473.23 L936.13,469.98 L936.74,466.72 L937.33,463.46 L937.92,460.21 L938.50,456.95 L939.06,453.70 L939.61,450.44 L940.16,447.18 L940.69,443.93 L941.21,440.67 L941.71,437.42 L942.21,434.16 L942.69,430.90 L943.16,427.65 L943.62,424.39 L944.06,421.14 L944.50,417.88 L944.92,414.62 L945.32,411.37 L945.72,408.11 L946.10,404.86 L946.46,401.60 L946.82,398.34 L947.16,395.09 L947.48,391.83 L947.80,388.58 L948.09,385.32 L948.38,382.06 L948.65,378.81 L948.91,375.55 L949.15,372.30 L949.38,369.04 L949.59,365.78 L949.79,362.53 L949.97,359.27 L950.14,356.02 L950.30,352.76 L950.44,349.50 L950.56,346.25 L950.68,342.99 L950.77,339.74 L950.85,336.48 L950.92,333.22 L950.97,329.97 L951.01,326.71 L951.03,323.46 L951.04,320.20 L951.03,316.94 L951.01,313.69 L950.97,310.43 L950.92,307.18 L950.85,303.92 L950.77,300.66 L950.68,297.41 L950.56,294.15 L950.44,290.90 L950.30,287.64 L950.14,284.38 L949.97,281.13 L949.79,277.87 L949.59,274.62 L949.38,271.36 L949.15,268.10 L948.91,264.85 L948.65,261.59 L948.38,258.34 L948.09,255.08 L947.80,251.82 L947.48,248.57 L947.16,245.31 L946.82,242.06 L946.46,238.80 L946.10,235.54 L945.72,232.29 L945.32,229.03 L944.92,225.78 L944.50,222.52 L944.06,219.26 L943.62,216.01 L943.16,212.75 L942.69,209.50 L942.21,206.24 L941.71,202.98 L941.21,199.73 L940.69,196.47 L940.16,193.22 L939.61,189.96 L939.06,186.70 L938.50,183.45 L937.92,180.19 L937.33,176.94 L936.74,173.68 L936.13,170.42 L935.51,167.17 L934.88,163.91 L934.24,160.66 L933.59,157.40 L932.94,154.14 L932.27,150.89 L931.59,147.63 L930.91,144.38 L930.21,141.12 L929.51,137.86 L928.80,134.61 L928.08,131.35 L927.35,128.10 L926.62,124.84 L925.88,121.58 L925.13,118.33 L924.37,115.07 L923.61,111.82 L922.84,108.56 L922.07,105.30 L921.28,102.05 L920.50,98.79 L919.70,95.54 L918.90,92.28 L918.10,89.02 L917.29,85.77 L916.48,82.51 L915.66,79.26 L914.84,76.00 L914.02,72.74 L913.19,69.49 L912.35,66.23 L911.52,62.98 L910.68,59.72 L909.84,56.46 L909.00,53.21 L908.15,49.95 L907.31,46.70 L906.46,43.44 L905.61,40.18 L904.76,36.93 L903.90,33.67 L903.05,30.42 L902.20,27.16"/>
<path d="M902.20,613.24 L902.20,609.98 L902.20,606.73 L902.20,603.47 L902.20,600.22 L902.20,596.96 L902.20,593.70 L902.20,590.45 L902.20,587.19 L902.20,583.94 L902.20,580.68 L902.20,577.42 L902.20,574.17 L902.20,570.91 L902.20,567.66 L902.20,564.40 L902.20,561.14 L902.20,557.89 L902.20,554.63 L902.20,551.38 L902.20,548.12 L902.20,544.86 L902.20,541.61 L902.20,538.35 L902.20,535.10 L902.20,531.84 L902.20,528.58 L902.20,525.33 L902.20,522.07 L902.20,518.82 L902.20,515.56 L902.20,512.30 L902.20,509.05 L902.20,505.79 L902.20,502.54 L902.20,499.28 L902.20,496.02 L902.20,492.77 L902.20,489.51 L902.20,486.26 L902.20,483.00 L902.20,479.74 L902.20,476.49 L902.20,473.23 L902.20,469.98 L902.20,466.72 L902.20,463.46 L902.20,460.21 L902.20,456.95 L902.20,453.70 L902.20,450.44 L902.20,447.18 L902.20,443.93 L902.20,440.67 L902.20,437.42 L902.20,434.16 L902.20,430.90 L902.20,427.65 L902.20,424.39 L902.20,421.14 L902.20,417.88 L902.20,414.62 L902.20,411.37 L902.20,408.11 L902.20,404.86 L902.20,401.60 L902.20,398.34 L902.20,395.09 L902.20,391.83 L902.20,388.58 L902.20,385.32 L902.20,382.06 L902.20,378.81 L902.20,375.55 L902.20,372.30 L902.20,369.04 L902.20,365.78 L902.20,362.53 L902.20,359.27 L902.20,356.02 L902.20,352.76 L902.20,349.50 L902.20,346.25 L902.20,342.99 L902.20,339.74 L902.20,336.48 L902.20,333.22 L902.20,329.97 L902.20,326.71 L902.20,323.46 L902.20,320.20 L902.20,316.94 L902.20,313.69 L902.20,310.43 L902.20,307.18 L902.20,303.92 L902.20,300.66 L902.20,297.41 L902.20,294.15 L902.20,290.90 L902.20,287.64 L902.20,284.38 L902.20,281.13 L902.20,277.87 L902.20,274.62 L902.20,271.36 L902.20,268.10 L902.20,264.85 L902.20,261.59 L902.20,258.34 L902.20,255.08 L902.20,251.82 L902.20,248.57 L902.20,245.31 L902.20,242.06 L902.20,238.80 L902.20,235.54 L902.20,232.29 L902.20,229.03 L902.20,225.78 L902.20,222.52 L902.20,219.26 L902.20,216.01 L902.20,212.75 L902.20,209.50 L902.20,206.24 L902.20,202.98 L902.20,199.73 L902.20,196.47 L902.20,193.22 L902.20,189.96 L902.20,186.70 L902.20,183.45 L902.20,180.19 L902.20,176.94 L902.20,173.68 L902.20,170.42 L902.20,167.17 L902.20,163.91 L902.20,160.66 L902.20,157.40 L902.20,154.14 L902.20,150.89 L902.20,147.63 L902.20,144.38 L902.20,141.12 L902.20,137.86 L902.20,134.61 L902.20,131.35 L902.20,128.10 L902.20,124.84 L902.20,121.58 L902.20,118.33 L902.20,115.07 L902.20,111.82 L902.20,108.56 L902.20,105.30 L902.20,102.05 L902.20,98.79 L902.20,95.54 L902.20,92.28 L902.20,89.02 L902.20,85.77 L902.20,82.51 L902.20,79.26 L902.20,76.00 L902.20,72.74 L902.20,69.49 L902.20,66.23 L902.20,62.98 L902.20,59.72 L902.20,56.46 L902.20,53.21 L902.20,49.95 L902.20,46.70 L902.20,43.44 L902.20,40.18 L902.20,36.93 L902.20,33.67 L902.20,30.42 L902.20,27.16"/>
<path d="M902.20,613.24 L901.35,609.98 L900.50,606.73 L899.64,603.47 L898.79,600.22 L897.94,596.96 L897.09,593.70 L896.25,590.45 L895.40,587.19 L894.56,583.94 L893.72,580.68 L892.88,577.42 L892.05,574.17 L891.21,570.91 L890.38,567.66 L889.56,564.40 L888.74,561.14 L887.92,557.89 L887.11,554.63 L886.30,551.38 L885.50,548.12 L884.70,544.86 L883.90,541.61 L883.12,538.35 L882.33,535.10 L881.56,531.84 L880.79,528.58 L880.03,525.33 L879.27,522.07 L878.52,518.82 L877.78,515.56 L877.05,512.30 L876.32,509.05 L875.60,505.79 L874.89,502.54 L874.19,499.28 L873.49,496.02 L872.81,492.77 L872.13,489.51 L871.46,486.26 L870.81,483.00 L870.16,479.74 L869.52,476.49 L868.89,473.23 L868.27,469.98 L867.66,466.72 L867.07,463.46 L866.48,460.21 L865.90,456.95 L865.34,453.70 L864.79,450.44 L864.24,447.18 L863.71,443.93 L863.19,440.67 L862.69,437.42 L862.19,434.16 L861.71,430.90 L861.24,427.65 L860.78,424.39 L860.34,421.14 L859.90,417.88 L859.48,414.62 L859.08,411.37 L858.68,408.11 L858.30,404.86 L857.94,401.60 L857.58,398.34 L857.24,395.09 L856.92,391.83 L856.60,388.58 L856.31,385.32 L856.02,382.06 L855.75,378.81 L855.49,375.55 L855.25,372.30 L855.02,369.04 L854.81,365.78 L854.61,362.53 L854.43,359.27 L854.26,356.02 L854.10,352.76 L853.96,349.50 L853.84,346.25 L853.72,342.99 L853.63,339.74 L853.55,336.48 L853.48,333.22 L853.43,329.97 L853.39,326.71 L853.37,323.46 L853.36,320.20 L853.37,316.94 L853.39,313.69 L853.43,310.43 L853.48,307.18 L853.55,303.92 L853.63,300.66 L853.72,297.41 L853.84,294.15 L853.96,290.90 L854.10,287.64 L854.26,284.38 L854.43,281.13 L854.61,277.87 L854.81,274.62 L855.02,271.36 L855.25,268.10 L855.49,264.85 L855.75,261.59 L856.02,258.34 L856.31,255.08 L856.60,251.82 L856.92,248.57 L857.24,245.31 L857.58,242.06 L857.94,238.80 L858.30,235.54 L858.68,232.29 L859.08,229.03 L859.48,225.78 L859.90,222.52 L860.34,219.26 L860.78,216.01 L861.24,212.75 L861.71,209.50 L862.19,206.24 L862.69,202.98 L863.19,199.73 L863.71,196.47 L864.24,193.22 L864.79,189.96 L865.34,186.70 L865.90,183.45 L866.48,180.19 L867.07,176.94 L867.66,173.68 L868.27,170.42 L868.89,167.17 L869.52,163.91 L870.16,160.66 L870.81,157.40 L871.46,154.14 L872.13,150.89 L872.81,147.63 L873.49,144.38 L874.19,141.12 L874.89,137.86 L875.60,134.61 L876.32,131.35 L877.05,128.10 L877.78,124.84 L878.52,121.58 L879.27,118.33 L880.03,115.07 L880.79,111.82 L881.56,108.56 L882.33,105.30 L883.12,102.05 L883.90,98.79 L884.70,95.54 L885.50,92.28 L886.30,89.02 L887.11,85.77 L887.92,82.51 L888.74,79.26 L889.56,76.00 L890.38,72.74 L891.21,69.49 L892.05,66.23 L892.88,62.98 L893.72,59.72 L894.56,56.46 L895.40,53.21 L896.25,49.95 L897.09,46.70 L897.94,43.44 L898.79,40.18 L899.64,36.93 L900.50,33.67 L901.35,30.42 L902.20,27.16"/>
<path d="M902.20,613.24 L900.50,609.98 L898.79,606.73 L897.09,603.47 L895.39,600.22 L893.69,596.96 L891.99,593.70 L890.30,590.45 L888.61,587.19 L886.92,583.94 L885.24,580.68 L883.56,577.42 L881.89,574.17 L880.23,570.91 L878.57,567.66 L876.92,564.40 L875.28,561.14 L873.64,557.89 L872.02,554.63 L870.40,551.38 L868.79,548.12 L867.19,544.86 L865.61,541.61 L864.03,538.35 L862.47,535.10 L860.92,531.84 L859.38,528.58 L857.85,525.33 L856.34,522.07 L854.84,518.82 L853.36,515.56 L851.89,512.30 L850.44,509.05 L849.00,505.79 L847.58,502.54 L846.17,499.28 L844.79,496.02 L843.41,492.77 L842.06,489.51 L840.73,486.26 L839.41,483.00 L838.12,479.74 L836.84,476.49 L835.58,473.23 L834.35,469.98 L833.13,466.72 L831.93,463.46 L830.76,460.21 L829.61,456.95 L828.48,453.70 L827.37,450.44 L826.29,447.18 L825.23,443.93 L824.19,440.67 L823.18,437.42 L822.19,434.16 L821.22,430.90 L820.28,427.65 L819.36,424.39 L818.47,421.14 L817.61,417.88 L816.77,414.62 L815.95,411.37 L815.17,408.11 L814.41,404.86 L813.67,401.60 L812.96,398.34 L812.29,395.09 L811.63,391.83 L811.01,388.58 L810.41,385.32 L809.84,382.06 L809.30,378.81 L808.79,375.55 L808.30,372.30 L807.85,369.04 L807.42,365.78 L807.02,362.53 L806.65,359.27 L806.31,356.02 L806.00,352.76 L805.72,349.50 L805.47,346.25 L805.25,342.99 L805.06,339.74 L804.89,336.48 L804.76,333.22 L804.65,329.97 L804.58,326.71 L804.53,323.46 L804.52,320.20 L804.53,316.94 L804.58,313.69 L804.65,310.43 L804.76,307.18 L804.89,303.92 L805.06,300.66 L805.25,297.41 L805.47,294.15 L805.72,290.90 L806.00,287.64 L806.31,284.38 L806.65,281.13 L807.02,277.87 L807.42,274.62 L807.85,271.36 L808.30,268.10 L808.79,264.85 L809.30,261.59 L809.84,258.34 L810.41,255.08 L811.01,251.82 L811.63,248.57 L812.29,245.31 L812.96,242.06 L813.67,238.80 L814.41,235.54 L815.17,232.29 L815.95,229.03 L816.77,225.78 L817.61,222.52 L818.47,219.26 L819.36,216.01 L820.28,212.75 L821.22,209.50 L822.19,206.24 L823.18,202.98 L824.19,199.73 L825.23,196.47 L826.29,193.22 L827.37,189.96 L828.48,186.70 L829.61,183.45 L830.76,180.19 L831.93,176.94 L833.13,173.68 L834.35,170.42 L835.58,167.17 L836.84,163.91 L838.12,160.66 L839.41,157.40 L840.73,154.14 L842.06,150.89 L843.41,147.63 L844.79,144.38 L846.17,141.12 L847.58,137.86 L849.00,134.61 L850.44,131.35 L851.89,128.10 L853.36,124.84 L854.84,121.58 L856.34,118.33 L857.85,115.07 L859.38,111.82 L860.92,108.56 L862.47,105.30 L864.03,102.05 L865.61,98.79 L867.19,95.54 L868.79,92.28 L870.40,89.02 L872.02,85.77 L873.64,82.51 L875.28,79.26 L876.92,76.00 L878.57,72.74 L880.23,69.49 L881.89,66.23 L883.56,62.98 L885.24,59.72 L886.92,56.46 L888.61,53.21 L890.30,49.95 L891.99,46.70 L893.69,43.44 L895.39,40.18 L897.09,36.93 L898.79,33.67 L900.50,30.42 L902.20,27.16"/>
<path d="M902.20,613.24 L899.64,609.98 L897.09,606.73 L894.53,603.47 L891.98,600.22 L889.43,596.96 L886.88,593.70 L884.34,590.45 L881.81,587.19 L879.28,583.94 L876.76,580.68 L874.24,577.42 L871.74,574.17 L869.24,570.91 L866.75,567.66 L864.28,564.40 L861.81,561.14 L859.36,557.89 L856.92,554.63 L854.50,551.38 L852.09,548.12 L849.69,544.86 L847.31,541.61 L844.95,538.35 L842.60,535.10 L840.28,531.84 L837.97,528.58 L835.68,525.33 L833.41,522.07 L831.17,518.82 L828.94,515.56 L826.74,512.30 L824.56,509.05 L822.40,505.79 L820.27,502.54 L818.16,499.28 L816.08,496.02 L814.02,492.77 L811.99,489.51 L809.99,486.26 L808.02,483.00 L806.07,479.74 L804.16,476.49 L802.27,473.23 L800.42,469.98 L798.59,466.72 L796.80,463.46 L795.04,460.21 L793.31,456.95 L791.62,453.70 L789.96,450.44 L788.33,447.18 L786.74,443.93 L785.18,440.67 L783.66,437.42 L782.18,434.16 L780.73,430.90 L779.32,427.65 L777.94,424.39 L776.61,421.14 L775.31,417.88 L774.05,414.62 L772.83,411.37 L771.65,408.11 L770.51,404.86 L769.41,401.60 L768.35,398.34 L767.33,395.09 L766.35,391.83 L765.41,388.58 L764.52,385.32 L763.66,382.06 L762.85,378.81 L762.08,375.55 L761.36,372.30 L760.67,369.04 L760.03,365.78 L759.44,362.53 L758.88,359.27 L758.37,356.02 L757.91,352.76 L757.48,349.50 L757.11,346.25 L756.77,342.99 L756.48,339.74 L756.24,336.48 L756.04,333.22 L755.88,329.97 L755.77,326.71 L755.70,323.46 L755.68,320.20 L755.70,316.94 L755.77,313.69 L755.88,310.43 L756.04,307.18 L756.24,303.92 L756.48,300.66 L756.77,297.41 L757.11,294.15 L757.48,290.90 L757.91,287.64 L758.37,284.38 L758.88,281.13 L759.44,277.87 L760.03,274.62 L760.67,271.36 L761.36,268.10 L762.08,264.85 L762.85,261.59 L763.66,258.34 L764.52,255.08 L765.41,251.82 L766.35,248.57 L767.33,245.31 L768.35,242.06 L769.41,238.80 L770.51,235.54 L771.65,232.29 L772.83,229.03 L774.05,225.78 L775.31,222.52 L776.61,219.26 L777.94,216.01 L779.32,212.75 L780.73,209.50 L782.18,206.24 L783.66,202.98 L785.18,199.73 L786.74,196.47 L788.33,193.22 L789.96,189.96 L791.62,186.70 L793.31,183.45 L795.04,180.19 L796.80,176.94 L798.59,173.68 L800.42,170.42 L802.27,167.17 L804.16,163.91 L806.07,160.66 L808.02,157.40 L809.99,154.14 L811.99,150.89 L814.02,147.63 L816.08,144.38 L818.16,141.12 L820.27,137.86 L822.40,134.61 L824.56,131.35 L826.74,128.10 L828.94,124.84 L831.17,121.58 L833.41,118.33 L835.68,115.07 L837.97,111.82 L840.28,108.56 L842.60,105.30 L844.95,102.05 L847.31,98.79 L849.69,95.54 L852.09,92.28 L854.50,89.02 L856.92,85.77 L859.36,82.51 L861.81,79.26 L864.28,76.00 L866.75,72.74 L869.24,69.49 L871.74,66.23 L874.24,62.98 L876.76,59.72 L879.28,56.46 L881.81,53.21 L884.34,49.95 L886.88,46.70 L889.43,43.44 L891.98,40.18 L894.53,36.93 L897.09,33.67 L899.64,30.42 L902.20,27.16"/>
<path d="M902.20,613.24 L898.79,609.98 L895.38,606.73 L891.98,603.47 L888.57,600.22 L885.17,596.96 L881.78,593.70 L878.39,590.45 L875.01,587.19 L871.64,583.94 L868.28,580.68 L864.92,577.42 L861.58,574.17 L858.25,570.91 L854.94,567.66 L851.64,564.40 L848.35,561.14 L845.08,557.89 L841.83,554.63 L838.60,551.38 L835.38,548.12 L832.19,544.86 L829.02,541.61 L825.87,538.35 L822.74,535.10 L819.64,531.84 L816.56,528.58 L813.51,525.33 L810.48,522.07 L807.49,518.82 L804.52,515.56 L801.58,512.30 L798.67,509.05 L795.80,505.79 L792.96,502.54 L790.15,499.28 L787.37,496.02 L784.63,492.77 L781.92,489.51 L779.26,486.26 L776.63,483.00 L774.03,479.74 L771.48,476.49 L768.96,473.23 L766.49,469.98 L764.06,466.72 L761.67,463.46 L759.32,460.21 L757.02,456.95 L754.76,453.70 L752.55,450.44 L750.38,447.18 L748.25,443.93 L746.18,440.67 L744.15,437.42 L742.17,434.16 L740.24,430.90 L738.36,427.65 L736.53,424.39 L734.74,421.14 L733.01,417.88 L731.33,414.62 L729.71,411.37 L728.13,408.11 L726.61,404.86 L725.14,401.60 L723.73,398.34 L722.37,395.09 L721.07,391.83 L719.82,388.58 L718.62,385.32 L717.48,382.06 L716.40,378.81 L715.38,375.55 L714.41,372.30 L713.50,369.04 L712.64,365.78 L711.85,362.53 L711.11,359.27 L710.43,356.02 L709.81,352.76 L709.25,349.50 L708.74,346.25 L708.30,342.99 L707.91,339.74 L707.58,336.48 L707.32,333.22 L707.11,329.97 L706.96,326.71 L706.87,323.46 L706.84,320.20 L706.87,316.94 L706.96,313.69 L707.11,310.43 L707.32,307.18 L707.58,303.92 L707.91,300.66 L708.30,297.41 L708.74,294.15 L709.25,290.90 L709.81,287.64 L710.43,284.38 L711.11,281.13 L711.85,277.87 L712.64,274.62 L713.50,271.36 L714.41,268.10 L715.38,264.85 L716.40,261.59 L717.48,258.34 L718.62,255.08 L719.82,251.82 L721.07,248.57 L722.37,245.31 L723.73,242.06 L725.14,238.80 L726.61,235.54 L728.13,232.29 L729.71,229.03 L731.33,225.78 L733.01,222.52 L734.74,219.26 L736.53,216.01 L738.36,212.75 L740.24,209.50 L742.17,206.24 L744.15,202.98 L746.18,199.73 L748.25,196.47 L750.38,193.22 L752.55,189.96 L754.76,186.70 L757.02,183.45 L759.32,180.19 L761.67,176.94 L764.06,173.68 L766.49,170.42 L768.96,167.17 L771.48,163.91 L774.03,160.66 L776.63,157.40 L779.26,154.14 L781.92,150.89 L784.63,147.63 L787.37,144.38 L790.15,141.12 L792.96,137.86 L795.80,134.61 L798.67,131.35 L801.58,128.10 L804.52,124.84 L807.49,121.58 L810.48,118.33 L813.51,115.07 L816.56,111.82 L819.64,108.56 L822.74,105.30 L825.87,102.05 L829.02,98.79 L832.19,95.54 L835.38,92.28 L838.60,89.02 L841.83,85.77 L845.08,82.51 L848.35,79.26 L851.64,76.00 L854.94,72.74 L858.25,69.49 L861.58,66.23 L864.92,62.98 L868.28,59.72 L871.64,56.46 L875.01,53.21 L878.39,49.95 L881.78,46.70 L885.17,43.44 L888.57,40.18 L891.98,36.93 L895.38,33.67 L898.79,30.42 L902.20,27.16"/>
<path d="M902.20,613.24 L897.94,609.98 L893.68,606.73 L889.42,603.47 L885.17,600.22 L880.92,596.96 L876.67,593.70 L872.44,590.45 L868.21,587.19 L864.00,583.94 L859.80,580.68 L855.60,577.42 L851.43,574.17 L847.27,570.91 L843.12,567.66 L839.00,564.40 L834.89,561.14 L830.80,557.89 L826.74,554.63 L822.70,551.38 L818.68,548.12 L814.69,544.86 L810.72,541.61 L806.78,538.35 L802.87,535.10 L799.00,531.84 L795.15,528.58 L791.34,525.33 L787.56,522.07 L783.81,518.82 L780.10,515.56 L776.43,512.30 L772.79,509.05 L769.20,505.79 L765.65,502.54 L762.13,499.28 L758.66,496.02 L755.24,492.77 L751.86,489.51 L748.52,486.26 L745.23,483.00 L741.99,479.74 L738.80,476.49 L735.66,473.23 L732.56,469.98 L729.52,466.72 L726.54,463.46 L723.60,460.21 L720.72,456.95 L717.90,453.70 L715.13,450.44 L712.42,447.18 L709.77,443.93 L707.17,440.67 L704.64,437.42 L702.16,434.16 L699.75,430.90 L697.40,427.65 L695.11,424.39 L692.88,421.14 L690.72,417.88 L688.62,414.62 L686.58,411.37 L684.62,408.11 L682.71,404.86 L680.88,401.60 L679.11,398.34 L677.41,395.09 L675.78,391.83 L674.22,388.58 L672.73,385.32 L671.30,382.06 L669.95,378.81 L668.67,375.55 L667.46,372.30 L666.32,369.04 L665.25,365.78 L664.26,362.53 L663.34,359.27 L662.49,356.02 L661.71,352.76 L661.01,349.50 L660.38,346.25 L659.82,342.99 L659.34,339.74 L658.93,336.48 L658.59,333.22 L658.33,329.97 L658.15,326.71 L658.04,323.46 L658.00,320.20 L658.04,316.94 L658.15,313.69 L658.33,310.43 L658.59,307.18 L658.93,303.92 L659.34,300.66 L659.82,297.41 L660.38,294.15 L661.01,290.90 L661.71,287.64 L662.49,284.38 L663.34,281.13 L664.26,277.87 L665.25,274.62 L666.32,271.36 L667.46,268.10 L668.67,264.85 L669.95,261.59 L671.30,258.34 L672.73,255.08 L674.22,251.82 L675.78,248.57 L677.41,245.31 L679.11,242.06 L680.88,238.80 L682.71,235.54 L684.62,232.29 L686.58,229.03 L688.62,225.78 L690.72,222.52 L692.88,219.26 L695.11,216.01 L697.40,212.75 L699.75,209.50 L702.16,206.24 L704.64,202.98 L707.17,199.73 L709.77,196.47 L712.42,193.22 L715.13,189.96 L717.90,186.70 L720.72,183.45 L723.60,180.19 L726.54,176.94 L729.52,173.68 L732.56,170.42 L735.66,167.17 L738.80,163.91 L741.99,160.66 L745.23,157.40 L748.52,154.14 L751.86,150.89 L755.24,147.63 L758.66,144.38 L762.13,141.12 L765.65,137.86 L769.20,134.61 L772.79,131.35 L776.43,128.10 L780.10,124.84 L783.81,121.58 L787.56,118.33 L791.34,115.07 L795.15,111.82 L799.00,108.56 L802.87,105.30 L806.78,102.05 L810.72,98.79 L814.69,95.54 L818.68,92.28 L822.70,89.02 L826.74,85.77 L830.80,82.51 L834.89,79.26 L839.00,76.00 L843.12,72.74 L847.27,69.49 L851.43,66.23 L855.60,62.98 L859.80,59.72 L864.00,56.46 L868.21,53.21 L872.44,49.95 L876.67,46.70 L880.92,43.44 L885.17,40.18 L889.42,36.93 L893.68,33.67 L897.94,30.42 L902.20,27.16"/>
<path d="M902.20,613.24 L897.09,609.98 L891.97,606.73 L886.86,603.47 L881.76,600.22 L876.66,596.96 L871.57,593.70 L866.49,590.45 L861.42,587.19 L856.36,583.94 L851.31,580.68 L846.29,577.42 L841.27,574.17 L836.28,570.91 L831.31,567.66 L826.36,564.40 L821.43,561.14 L816.52,557.89 L811.65,554.63 L806.80,551.38 L801.97,548.12 L797.18,544.86 L792.43,541.61 L787.70,538.35 L783.01,535.10 L778.36,531.84 L773.74,528.58 L769.16,525.33 L764.63,522.07 L760.13,518.82 L755.68,515.56 L751.27,512.30 L746.91,509.05 L742.60,505.79 L738.33,502.54 L734.12,499.28 L729.96,496.02 L725.84,492.77 L721.79,489.51 L717.78,486.26 L713.84,483.00 L709.95,479.74 L706.12,476.49 L702.35,473.23 L698.64,469.98 L694.99,466.72 L691.40,463.46 L687.88,460.21 L684.43,456.95 L681.04,453.70 L677.72,450.44 L674.47,447.18 L671.28,443.93 L668.17,440.67 L665.13,437.42 L662.16,434.16 L659.26,430.90 L656.44,427.65 L653.69,424.39 L651.02,421.14 L648.42,417.88 L645.90,414.62 L643.46,411.37 L641.10,408.11 L638.82,404.86 L636.62,401.60 L634.49,398.34 L632.46,395.09 L630.50,391.83 L628.62,388.58 L626.83,385.32 L625.13,382.06 L623.50,378.81 L621.96,375.55 L620.51,372.30 L619.15,369.04 L617.86,365.78 L616.67,362.53 L615.56,359.27 L614.54,356.02 L613.61,352.76 L612.77,349.50 L612.01,346.25 L611.34,342.99 L610.77,339.74 L610.28,336.48 L609.87,333.22 L609.56,329.97 L609.34,326.71 L609.20,323.46 L609.16,320.20 L609.20,316.94 L609.34,313.69 L609.56,310.43 L609.87,307.18 L610.28,303.92 L610.77,300.66 L611.34,297.41 L612.01,294.15 L612.77,290.90 L613.61,287.64 L614.54,284.38 L615.56,281.13 L616.67,277.87 L617.86,274.62 L619.15,271.36 L620.51,268.10 L621.96,264.85 L623.50,261.59 L625.13,258.34 L626.83,255.08 L628.62,251.82 L630.50,248.57 L632.46,245.31 L634.49,242.06 L636.62,238.80 L638.82,235.54 L641.10,232.29 L643.46,229.03 L645.90,225.78 L648.42,222.52 L651.02,219.26 L653.69,216.01 L656.44,212.75 L659.26,209.50 L662.16,206.24 L665.13,202.98 L668.17,199.73 L671.28,196.47 L674.47,193.22 L677.72,189.96 L681.04,186.70 L684.43,183.45 L687.88,180.19 L691.40,176.94 L694.99,173.68 L698.64,170.42 L702.35,167.17 L706.12,163.91 L709.95,160.66 L713.84,157.40 L717.78,154.14 L721.79,150.89 L725.84,147.63 L729.96,144.38 L734.12,141.12 L738.33,137.86 L742.60,134.61 L746.91,131.35 L751.27,128.10 L755.68,124.84 L760.13,121.58 L764.63,118.33 L769.16,115.07 L773.74,111.82 L778.36,108.56 L783.01,105.30 L787.70,102.05 L792.43,98.79 L797.18,95.54 L801.97,92.28 L806.80,89.02 L811.65,85.77 L816.52,82.51 L821.43,79.26 L826.36,76.00 L831.31,72.74 L836.28,69.49 L841.27,66.23 L846.29,62.98 L851.31,59.72 L856.36,56.46 L861.42,53.21 L866.49,49.95 L871.57,46.70 L876.66,43.44 L881.76,40.18 L886.86,36.93 L891.97,33.67 L897.09,30.42 L902.20,27.16"/>
<path d="M902.20,613.24 L896.23,609.98 L890.27,606.73 L884.31,603.47 L878.35,600.22 L872.40,596.96 L866.46,593.70 L860.54,590.45 L854.62,587.19 L848.72,583.94 L842.83,580.68 L836.97,577.42 L831.12,574.17 L825.29,570.91 L819.49,567.66 L813.71,564.40 L807.97,561.14 L802.24,557.89 L796.55,554.63 L790.89,551.38 L785.27,548.12 L779.68,544.86 L774.13,541.61 L768.62,538.35 L763.14,535.10 L757.72,531.84 L752.33,528.58 L746.99,525.33 L741.70,522.07 L736.45,518.82 L731.26,515.56 L726.12,512.30 L721.03,509.05 L716.00,505.79 L711.02,502.54 L706.11,499.28 L701.25,496.02 L696.45,492.77 L691.72,489.51 L687.05,486.26 L682.44,483.00 L677.91,479.74 L673.44,476.49 L669.04,473.23 L664.71,469.98 L660.45,466.72 L656.27,463.46 L652.16,460.21 L648.13,456.95 L644.18,453.70 L640.30,450.44 L636.51,447.18 L632.79,443.93 L629.16,440.67 L625.61,437.42 L622.15,434.16 L618.77,430.90 L615.48,427.65 L612.27,424.39 L609.15,421.14 L606.12,417.88 L603.19,414.62 L600.34,411.37 L597.58,408.11 L594.92,404.86 L592.35,401.60 L589.88,398.34 L587.50,395.09 L585.21,391.83 L583.03,388.58 L580.94,385.32 L578.95,382.06 L577.05,378.81 L575.26,375.55 L573.56,372.30 L571.97,369.04 L570.48,365.78 L569.08,362.53 L567.79,359.27 L566.60,356.02 L565.51,352.76 L564.53,349.50 L563.65,346.25 L562.87,342.99 L562.19,339.74 L561.62,336.48 L561.15,333.22 L560.79,329.97 L560.53,326.71 L560.37,323.46 L560.32,320.20 L560.37,316.94 L560.53,313.69 L560.79,310.43 L561.15,307.18 L561.62,303.92 L562.19,300.66 L562.87,297.41 L563.65,294.15 L564.53,290.90 L565.51,287.64 L566.60,284.38 L567.79,281.13 L569.08,277.87 L570.48,274.62 L571.97,271.36 L573.56,268.10 L575.26,264.85 L577.05,261.59 L578.95,258.34 L580.94,255.08 L583.03,251.82 L585.21,248.57 L587.50,245.31 L589.88,242.06 L592.35,238.80 L594.92,235.54 L597.58,232.29 L600.34,229.03 L603.19,225.78 L606.12,222.52 L609.15,219.26 L612.27,216.01 L615.48,212.75 L618.77,209.50 L622.15,206.24 L625.61,202.98 L629.16,199.73 L632.79,196.47 L636.51,193.22 L640.30,189.96 L644.18,186.70 L648.13,183.45 L652.16,180.19 L656.27,176.94 L660.45,173.68 L664.71,170.42 L669.04,167.17 L673.44,163.91 L677.91,160.66 L682.44,157.40 L687.05,154.14 L691.72,150.89 L696.45,147.63 L701.25,144.38 L706.11,141.12 L711.02,137.86 L716.00,134.61 L721.03,131.35 L726.12,128.10 L731.26,124.84 L736.45,121.58 L741.70,118.33 L746.99,115.07 L752.33,111.82 L757.72,108.56 L763.14,105.30 L768.62,102.05 L774.13,98.79 L779.68,95.54 L785.27,92.28 L790.89,89.02 L796.55,85.77 L802.24,82.51 L807.97,79.26 L813.71,76.00 L819.49,72.74 L825.29,69.49 L831.12,66.23 L836.97,62.98 L842.83,59.72 L848.72,56.46 L854.62,53.21 L860.54,49.95 L866.46,46.70 L872.40,43.44 L878.35,40.18 L884.31,36.93 L890.27,33.67 L896.23,30.42 L902.20,27.16"/>
<path d="M902.20,613.24 L895.38,609.98 L888.56,606.73 L881.75,603.47 L874.94,600.22 L868.15,596.96 L861.36,593.70 L854.58,590.45 L847.82,587.19 L841.08,583.94 L834.35,580.68 L827.65,577.42 L820.96,574.17 L814.31,570.91 L807.68,567.66 L801.07,564.40 L794.50,561.14 L787.96,557.89 L781.46,554.63 L774.99,551.38 L768.57,548.12 L762.18,544.86 L755.83,541.61 L749.53,538.35 L743.28,535.10 L737.07,531.84 L730.92,528.58 L724.82,525.33 L718.77,522.07 L712.78,518.82 L706.84,515.56 L700.96,512.30 L695.15,509.05 L689.40,505.79 L683.71,502.54 L678.09,499.28 L672.54,496.02 L667.06,492.77 L661.65,489.51 L656.31,486.26 L651.05,483.00 L645.86,479.74 L640.76,476.49 L635.73,473.23 L630.78,469.98 L625.92,466.72 L621.14,463.46 L616.45,460.21 L611.84,456.95 L607.32,453.70 L602.89,450.44 L598.55,447.18 L594.31,443.93 L590.16,440.67 L586.10,437.42 L582.14,434.16 L578.28,430.90 L574.51,427.65 L570.85,424.39 L567.29,421.14 L563.83,417.88 L560.47,414.62 L557.21,411.37 L554.07,408.11 L551.02,404.86 L548.09,401.60 L545.26,398.34 L542.54,395.09 L539.93,391.83 L537.43,388.58 L535.04,385.32 L532.77,382.06 L530.60,378.81 L528.55,375.55 L526.62,372.30 L524.79,369.04 L523.09,365.78 L521.49,362.53 L520.02,359.27 L518.66,356.02 L517.42,352.76 L516.29,349.50 L515.28,346.25 L514.39,342.99 L513.62,339.74 L512.97,336.48 L512.43,333.22 L512.02,329.97 L511.72,326.71 L511.54,323.46 L511.48,320.20 L511.54,316.94 L511.72,313.69 L512.02,310.43 L512.43,307.18 L512.97,303.92 L513.62,300.66 L514.39,297.41 L515.28,294.15 L516.29,290.90 L517.42,287.64 L518.66,284.38 L520.02,281.13 L521.49,277.87 L523.09,274.62 L524.79,271.36 L526.62,268.10 L528.55,264.85 L530.60,261.59 L532.77,258.34 L535.04,255.08 L537.43,251.82 L539.93,248.57 L542.54,245.31 L545.26,242.06 L548.09,238.80 L551.02,235.54 L554.07,232.29 L557.21,229.03 L560.47,225.78 L563.83,222.52 L567.29,219.26 L570.85,216.01 L574.51,212.75 L578.28,209.50 L582.14,206.24 L586.10,202.98 L590.16,199.73 L594.31,196.47 L598.55,193.22 L602.89,189.96 L607.32,186.70 L611.84,183.45 L616.45,180.19 L621.14,176.94 L625.92,173.68 L630.78,170.42 L635.73,167.17 L640.76,163.91 L645.86,160.66 L651.05,157.40 L656.31,154.14 L661.65,150.89 L667.06,147.63 L672.54,144.38 L678.09,141.12 L683.71,137.86 L689.40,134.61 L695.15,131.35 L700.96,128.10 L706.84,124.84 L712.78,121.58 L718.77,118.33 L724.82,115.07 L730.92,111.82 L737.07,108.56 L743.28,105.30 L749.53,102.05 L755.83,98.79 L762.18,95.54 L768.57,92.28 L774.99,89.02 L781.46,85.77 L787.96,82.51 L794.50,79.26 L801.07,76.00 L807.68,72.74 L814.31,69.49 L820.96,66.23 L827.65,62.98 L834.35,59.72 L841.08,56.46 L847.82,53.21 L854.58,49.95 L861.36,46.70 L868.15,43.44 L874.94,40.18 L881.75,36.93 L888.56,33.67 L895.38,30.42 L902.20,27.16"/>
<path d="M902.20,613.24 L894.53,609.98 L886.86,606.73 L879.20,603.47 L871.54,600.22 L863.89,596.96 L856.25,593.70 L848.63,590.45 L841.03,587.19 L833.44,583.94 L825.87,580.68 L818.33,577.42 L810.81,574.17 L803.32,570.91 L795.86,567.66 L788.43,564.40 L781.04,561.14 L773.69,557.89 L766.37,554.63 L759.09,551.38 L751.86,548.12 L744.68,544.86 L737.54,541.61 L730.45,538.35 L723.41,535.10 L716.43,531.84 L709.51,528.58 L702.64,525.33 L695.84,522.07 L689.10,518.82 L682.42,515.56 L675.81,512.30 L669.27,509.05 L662.80,505.79 L656.40,502.54 L650.08,499.28 L643.83,496.02 L637.67,492.77 L631.58,489.51 L625.58,486.26 L619.66,483.00 L613.82,479.74 L608.08,476.49 L602.42,473.23 L596.86,469.98 L591.38,466.72 L586.01,463.46 L580.73,460.21 L575.54,456.95 L570.46,453.70 L565.48,450.44 L560.60,447.18 L555.82,443.93 L551.15,440.67 L546.59,437.42 L542.13,434.16 L537.79,430.90 L533.55,427.65 L529.43,424.39 L525.42,421.14 L521.53,417.88 L517.75,414.62 L514.09,411.37 L510.55,408.11 L507.13,404.86 L503.82,401.60 L500.64,398.34 L497.58,395.09 L494.65,391.83 L491.84,388.58 L489.15,385.32 L486.59,382.06 L484.15,378.81 L481.85,375.55 L479.67,372.30 L477.62,369.04 L475.70,365.78 L473.91,362.53 L472.25,359.27 L470.72,356.02 L469.32,352.76 L468.05,349.50 L466.92,346.25 L465.92,342.99 L465.05,339.74 L464.31,336.48 L463.71,333.22 L463.24,329.97 L462.91,326.71 L462.71,323.46 L462.64,320.20 L462.71,316.94 L462.91,313.69 L463.24,310.43 L463.71,307.18 L464.31,303.92 L465.05,300.66 L465.92,297.41 L466.92,294.15 L468.05,290.90 L469.32,287.64 L470.72,284.38 L472.25,281.13 L473.91,277.87 L475.70,274.62 L477.62,271.36 L479.67,268.10 L481.85,264.85 L484.15,261.59 L486.59,258.34 L489.15,255.08 L491.84,251.82 L494.65,248.57 L497.58,245.31 L500.64,242.06 L503.82,238.80 L507.13,235.54 L510.55,232.29 L514.09,229.03 L517.75,225.78 L521.53,222.52 L525.42,219.26 L529.43,216.01 L533.55,212.75 L537.79,209.50 L542.13,206.24 L546.59,202.98 L551.15,199.73 L555.82,196.47 L560.60,193.22 L565.48,189.96 L570.46,186.70 L575.54,183.45 L580.73,180.19 L586.01,176.94 L591.38,173.68 L596.86,170.42 L602.42,167.17 L608.08,163.91 L613.82,160.66 L619.66,157.40 L625.58,154.14 L631.58,150.89 L637.67,147.63 L643.83,144.38 L650.08,141.12 L656.40,137.86 L662.80,134.61 L669.27,131.35 L675.81,128.10 L682.42,124.84 L689.10,121.58 L695.84,118.33 L702.64,115.07 L709.51,111.82 L716.43,108.56 L723.41,105.30 L730.45,102.05 L737.54,98.79 L744.68,95.54 L751.86,92.28 L759.09,89.02 L766.37,85.77 L773.69,82.51 L781.04,79.26 L788.43,76.00 L795.86,72.74 L803.32,69.49 L810.81,66.23 L818.33,62.98 L825.87,59.72 L833.44,56.46 L841.03,53.21 L848.63,49.95 L856.25,46.70 L863.89,43.44 L871.54,40.18 L879.20,36.93 L886.86,33.67 L894.53,30.42 L902.20,27.16"/>
<path d="M902.20,613.24 L893.68,609.98 L885.16,606.73 L876.64,603.47 L868.13,600.22 L859.63,596.96 L851.15,593.70 L842.68,590.45 L834.23,587.19 L825.80,583.94 L817.39,580.68 L809.01,577.42 L800.66,574.17 L792.33,570.91 L784.05,567.66 L775.79,564.40 L767.58,561.14 L759.41,557.89 L751.28,554.63 L743.19,551.38 L735.16,548.12 L727.17,544.86 L719.24,541.61 L711.37,538.35 L703.55,535.10 L695.79,531.84 L688.10,528.58 L680.47,525.33 L672.91,522.07 L665.42,518.82 L658.00,515.56 L650.66,512.30 L643.39,509.05 L636.20,505.79 L629.09,502.54 L622.07,499.28 L615.13,496.02 L608.27,492.77 L601.51,489.51 L594.84,486.26 L588.26,483.00 L581.78,479.74 L575.40,476.49 L569.11,473.23 L562.93,469.98 L556.85,466.72 L550.87,463.46 L545.01,460.21 L539.25,456.95 L533.60,453.70 L528.06,450.44 L522.64,447.18 L517.34,443.93 L512.15,440.67 L507.08,437.42 L502.13,434.16 L497.30,430.90 L492.59,427.65 L488.01,424.39 L483.56,421.14 L479.23,417.88 L475.04,414.62 L470.97,411.37 L467.03,408.11 L463.23,404.86 L459.56,401.60 L456.02,398.34 L452.63,395.09 L449.36,391.83 L446.24,388.58 L443.25,385.32 L440.41,382.06 L437.70,378.81 L435.14,375.55 L432.72,372.30 L430.44,369.04 L428.31,365.78 L426.32,362.53 L424.47,359.27 L422.77,356.02 L421.22,352.76 L419.81,349.50 L418.55,346.25 L417.44,342.99 L416.48,339.74 L415.66,336.48 L414.99,333.22 L414.47,329.97 L414.10,326.71 L413.87,323.46 L413.80,320.20 L413.87,316.94 L414.10,313.69 L414.47,310.43 L414.99,307.18 L415.66,303.92 L416.48,300.66 L417.44,297.41 L418.55,294.15 L419.81,290.90 L421.22,287.64 L422.77,284.38 L424.47,281.13 L426.32,277.87 L428.31,274.62 L430.44,271.36 L432.72,268.10 L435.14,264.85 L437.70,261.59 L440.41,258.34 L443.25,255.08 L446.24,251.82 L449.36,248.57 L452.63,245.31 L456.02,242.06 L459.56,238.80 L463.23,235.54 L467.03,232.29 L470.97,229.03 L475.04,225.78 L479.23,222.52 L483.56,219.26 L488.01,216.01 L492.59,212.75 L497.30,209.50 L502.13,206.24 L507.08,202.98 L512.15,199.73 L517.34,196.47 L522.64,193.22 L528.06,189.96 L533.60,186.70 L539.25,183.45 L545.01,180.19 L550.87,176.94 L556.85,173.68 L562.93,170.42 L569.11,167.17 L575.40,163.91 L581.78,160.66 L588.26,157.40 L594.84,154.14 L601.51,150.89 L608.27,147.63 L615.13,144.38 L622.07,141.12 L629.09,137.86 L636.20,134.61 L643.39,131.35 L650.66,128.10 L658.00,124.84 L665.42,121.58 L672.91,118.33 L680.47,115.07 L688.10,111.82 L695.79,108.56 L703.55,105.30 L711.37,102.05 L719.24,98.79 L727.17,95.54 L735.16,92.28 L743.19,89.02 L751.28,85.77 L759.41,82.51 L767.58,79.26 L775.79,76.00 L784.05,72.74 L792.33,69.49 L800.66,66.23 L809.01,62.98 L817.39,59.72 L825.80,56.46 L834.23,53.21 L842.68,49.95 L851.15,46.70 L859.63,43.44 L868.13,40.18 L876.64,36.93 L885.16,33.67 L893.68,30.42 L902.20,27.16"/>
<path d="M902.20,613.24 L892.82,609.98 L883.45,606.73 L874.08,603.47 L864.72,600.22 L855.38,596.96 L846.04,593.70 L836.73,590.45 L827.43,587.19 L818.16,583.94 L808.91,580.68 L799.69,577.42 L790.50,574.17 L781.35,570.91 L772.23,567.66 L763.15,564.40 L754.12,561.14 L745.13,557.89 L736.18,554.63 L727.29,551.38 L718.45,548.12 L709.67,544.86 L700.95,541.61 L692.28,538.35 L683.68,535.10 L675.15,531.84 L666.69,528.58 L658.30,525.33 L649.98,522.07 L641.74,518.82 L633.58,515.56 L625.50,512.30 L617.51,509.05 L609.60,505.79 L601.78,502.54 L594.05,499.28 L586.42,496.02 L578.88,492.77 L571.44,489.51 L564.10,486.26 L556.87,483.00 L549.74,479.74 L542.72,476.49 L535.80,473.23 L529.00,469.98 L522.31,466.72 L515.74,463.46 L509.29,460.21 L502.95,456.95 L496.74,453.70 L490.65,450.44 L484.69,447.18 L478.85,443.93 L473.14,440.67 L467.56,437.42 L462.12,434.16 L456.81,430.90 L451.63,427.65 L446.59,424.39 L441.70,421.14 L436.94,417.88 L432.32,414.62 L427.85,411.37 L423.52,408.11 L419.33,404.86 L415.30,401.60 L411.41,398.34 L407.67,395.09 L404.08,391.83 L400.64,388.58 L397.36,385.32 L394.23,382.06 L391.25,378.81 L388.43,375.55 L385.77,372.30 L383.27,369.04 L380.92,365.78 L378.73,362.53 L376.70,359.27 L374.83,356.02 L373.12,352.76 L371.57,349.50 L370.19,346.25 L368.96,342.99 L367.90,339.74 L367.00,336.48 L366.27,333.22 L365.70,329.97 L365.29,326.71 L365.04,323.46 L364.96,320.20 L365.04,316.94 L365.29,313.69 L365.70,310.43 L366.27,307.18 L367.00,303.92 L367.90,300.66 L368.96,297.41 L370.19,294.15 L371.57,290.90 L373.12,287.64 L374.83,284.38 L376.70,281.13 L378.73,277.87 L380.92,274.62 L383.27,271.36 L385.77,268.10 L388.43,264.85 L391.25,261.59 L394.23,258.34 L397.36,255.08 L400.64,251.82 L404.08,248.57 L407.67,245.31 L411.41,242.06 L415.30,238.80 L419.33,235.54 L423.52,232.29 L427.85,229.03 L432.32,225.78 L436.94,222.52 L441.70,219.26 L446.59,216.01 L451.63,212.75 L456.81,209.50 L462.12,206.24 L467.56,202.98 L473.14,199.73 L478.85,196.47 L484.69,193.22 L490.65,189.96 L496.74,186.70 L502.95,183.45 L509.29,180.19 L515.74,176.94 L522.31,173.68 L529.00,170.42 L535.80,167.17 L542.72,163.91 L549.74,160.66 L556.87,157.40 L564.10,154.14 L571.44,150.89 L578.88,147.63 L586.42,144.38 L594.05,141.12 L601.78,137.86 L609.60,134.61 L617.51,131.35 L625.50,128.10 L633.58,124.84 L641.74,121.58 L649.98,118.33 L658.30,115.07 L666.69,111.82 L675.15,108.56 L683.68,105.30 L692.28,102.05 L700.95,98.79 L709.67,95.54 L718.45,92.28 L727.29,89.02 L736.18,85.77 L745.13,82.51 L754.12,79.26 L763.15,76.00 L772.23,72.74 L781.35,69.49 L790.50,66.23 L799.69,62.98 L808.91,59.72 L818.16,56.46 L827.43,53.21 L836.73,49.95 L846.04,46.70 L855.38,43.44 L864.72,40.18 L874.08,36.93 L883.45,33.67 L892.82,30.42 L902.20,27.16"/>
<path d="M902.20,613.24 L891.97,609.98 L881.75,606.73 L871.53,603.47 L861.32,600.22 L851.12,596.96 L840.94,593.70 L830.77,590.45 L820.63,587.19 L810.52,583.94 L800.43,580.68 L790.37,577.42 L780.35,574.17 L770.36,570.91 L760.41,567.66 L750.51,564.40 L740.65,561.14 L730.85,557.89 L721.09,554.63 L711.39,551.38 L701.75,548.12 L692.17,544.86 L682.65,541.61 L673.20,538.35 L663.82,535.10 L654.51,531.84 L645.28,528.58 L636.13,525.33 L627.05,522.07 L618.06,518.82 L609.16,515.56 L600.35,512.30 L591.62,509.05 L583.00,505.79 L574.47,502.54 L566.04,499.28 L557.71,496.02 L549.49,492.77 L541.37,489.51 L533.37,486.26 L525.48,483.00 L517.70,479.74 L510.04,476.49 L502.49,473.23 L495.07,469.98 L487.78,466.72 L480.61,463.46 L473.57,460.21 L466.66,456.95 L459.88,453.70 L453.24,450.44 L446.73,447.18 L440.36,443.93 L434.14,440.67 L428.05,437.42 L422.11,434.16 L416.32,430.90 L410.67,427.65 L405.18,424.39 L399.83,421.14 L394.64,417.88 L389.60,414.62 L384.72,411.37 L380.00,408.11 L375.43,404.86 L371.03,401.60 L366.79,398.34 L362.71,395.09 L358.80,391.83 L355.05,388.58 L351.46,385.32 L348.05,382.06 L344.80,378.81 L341.73,375.55 L338.82,372.30 L336.09,369.04 L333.53,365.78 L331.14,362.53 L328.93,359.27 L326.89,356.02 L325.02,352.76 L323.34,349.50 L321.82,346.25 L320.49,342.99 L319.33,339.74 L318.35,336.48 L317.55,333.22 L316.92,329.97 L316.48,326.71 L316.21,323.46 L316.12,320.20 L316.21,316.94 L316.48,313.69 L316.92,310.43 L317.55,307.18 L318.35,303.92 L319.33,300.66 L320.49,297.41 L321.82,294.15 L323.34,290.90 L325.02,287.64 L326.89,284.38 L328.93,281.13 L331.14,277.87 L333.53,274.62 L336.09,271.36 L338.82,268.10 L341.73,264.85 L344.80,261.59 L348.05,258.34 L351.46,255.08 L355.05,251.82 L358.80,248.57 L362.71,245.31 L366.79,242.06 L371.03,238.80 L375.43,235.54 L380.00,232.29 L384.72,229.03 L389.60,225.78 L394.64,222.52 L399.83,219.26 L405.18,216.01 L410.67,212.75 L416.32,209.50 L422.11,206.24 L428.05,202.98 L434.14,199.73 L440.36,196.47 L446.73,193.22 L453.24,189.96 L459.88,186.70 L466.66,183.45 L473.57,180.19 L480.61,176.94 L487.78,173.68 L495.07,170.42 L502.49,167.17 L510.04,163.91 L517.70,160.66 L525.48,157.40 L533.37,154.14 L541.37,150.89 L549.49,147.63 L557.71,144.38 L566.04,141.12 L574.47,137.86 L583.00,134.61 L591.62,131.35 L600.35,128.10 L609.16,124.84 L618.06,121.58 L627.05,118.33 L636.13,115.07 L645.28,111.82 L654.51,108.56 L663.82,105.30 L673.20,102.05 L682.65,98.79 L692.17,95.54 L701.75,92.28 L711.39,89.02 L721.09,85.77 L730.85,82.51 L740.65,79.26 L750.51,76.00 L760.41,72.74 L770.36,69.49 L780.35,66.23 L790.37,62.98 L800.43,59.72 L810.52,56.46 L820.63,53.21 L830.77,49.95 L840.94,46.70 L851.12,43.44 L861.32,40.18 L871.53,36.93 L881.75,33.67 L891.97,30.42 L902.20,27.16"/>
</g>
<g font-family="Liberation Sans, sans-serif" fill="#8a8a8a">
<text x="313.27" y="329.80" font-size="10.28" textLength="26.64" lengthAdjust="spacingAndGlyphs" text-anchor="middle">+180</text>
<circle cx="330.25" cy="322.40" r="0.95" fill="none" stroke="#8a8a8a" stroke-width="0.7"/>
<text x="410.95" y="329.80" font-size="10.28" textLength="26.64" lengthAdjust="spacingAndGlyphs" text-anchor="middle">+150</text>
<circle cx="427.93" cy="322.40" r="0.95" fill="none" stroke="#8a8a8a" stroke-width="0.7"/>
<text x="508.63" y="329.80" font-size="10.28" textLength="26.64" lengthAdjust="spacingAndGlyphs" text-anchor="middle">+120</text>
<circle cx="525.61" cy="322.40" r="0.95" fill="none" stroke="#8a8a8a" stroke-width="0.7"/>
<text x="606.31" y="329.80" font-size="10.28" textLength="20.47" lengthAdjust="spacingAndGlyphs" text-anchor="middle">+90</text>
<circle cx="620.21" cy="322.40" r="0.95" fill="none" stroke="#8a8a8a" stroke-width="0.7"/>
<text x="703.99" y="329.80" font-size="10.28" textLength="20.47" lengthAdjust="spacingAndGlyphs" text-anchor="middle">+60</text>
<circle cx="717.89" cy="322.40" r="0.95" fill="none" stroke="#8a8a8a" stroke-width="0.7"/>
<text x="801.67" y="329.80" font-size="10.28" textLength="20.47" lengthAdjust="spacingAndGlyphs" text-anchor="middle">+30</text>
<circle cx="815.57" cy="322.40" r="0.95" fill="none" stroke="#8a8a8a" stroke-width="0.7"/>
<text x="899.35" y="329.80" font-size="10.28" textLength="14.30" lengthAdjust="spacingAndGlyphs" text-anchor="middle">+0</text>
<circle cx="910.16" cy="322.40" r="0.95" fill="none" stroke="#8a8a8a" stroke-width="0.7"/>
<text x="997.03" y="329.80" font-size="10.28" textLength="26.64" lengthAdjust="spacingAndGlyphs" text-anchor="middle">+330</text>
<circle cx="1014.01" cy="322.40" r="0.95" fill="none" stroke="#8a8a8a" stroke-width="0.7"/>
<text x="1094.71" y="329.80" font-size="10.28" textLength="26.64" lengthAdjust="spacingAndGlyphs" text-anchor="middle">+300</text>
<circle cx="1111.69" cy="322.40" r="0.95" fill="none" stroke="#8a8a8a" stroke-width="0.7"/>
<text x="1192.39" y="329.80" font-size="10.28" textLength="26.64" lengthAdjust="spacingAndGlyphs" text-anchor="middle">+270</text>
<circle cx="1209.37" cy="322.40" r="0.95" fill="none" stroke="#8a8a8a" stroke-width="0.7"/>
<text x="1290.07" y="329.80" font-size="10.28" textLength="26.64" lengthAdjust="spacingAndGlyphs" text-anchor="middle">+240</text>
<circle cx="1307.05" cy="322.40" r="0.95" fill="none" stroke="#8a8a8a" stroke-width="0.7"/>
<text x="1387.75" y="329.80" font-size="10.28" textLength="26.64" lengthAdjust="spacingAndGlyphs" text-anchor="middle">+210</text>
<circle cx="1404.73" cy="322.40" r="0.95" fill="none" stroke="#8a8a8a" stroke-width="0.7"/>
<text x="1485.43" y="329.80" font-size="10.28" textLength="26.64" lengthAdjust="spacingAndGlyphs" text-anchor="middle">+180</text>
<circle cx="1502.41" cy="322.40" r="0.95" fill="none" stroke="#8a8a8a" stroke-width="0.7"/>
<text x="900.35" y="25.00" font-size="10.28" textLength="20.47" lengthAdjust="spacingAndGlyphs" text-anchor="middle">+90</text>
<circle cx="914.25" cy="17.60" r="0.95" fill="none" stroke="#8a8a8a" stroke-width="0.7"/>
<text x="900.35" y="123.30" font-size="10.28" textLength="20.47" lengthAdjust="spacingAndGlyphs" text-anchor="middle">+60</text>
<circle cx="914.25" cy="115.90" r="0.95" fill="none" stroke="#8a8a8a" stroke-width="0.7"/>
<text x="900.35" y="221.00" font-size="10.28" textLength="20.47" lengthAdjust="spacingAndGlyphs" text-anchor="middle">+30</text>
<circle cx="914.25" cy="213.60" r="0.95" fill="none" stroke="#8a8a8a" stroke-width="0.7"/>
<text x="900.35" y="428.10" font-size="10.28" textLength="20.47" lengthAdjust="spacingAndGlyphs" text-anchor="middle">−30</text>
<circle cx="914.25" cy="420.70" r="0.95" fill="none" stroke="#8a8a8a" stroke-width="0.7"/>
<text x="900.35" y="526.00" font-size="10.28" textLength="20.47" lengthAdjust="spacingAndGlyphs" text-anchor="middle">−60</text>
<circle cx="914.25" cy="518.60" r="0.95" fill="none" stroke="#8a8a8a" stroke-width="0.7"/>
<text x="900.35" y="624.00" font-size="10.28" textLength="20.47" lengthAdjust="spacingAndGlyphs" text-anchor="middle">−90</text>
<circle cx="914.25" cy="616.60" r="0.95" fill="none" stroke="#8a8a8a" stroke-width="0.7"/>
</g>
<path d="M815.20,150.30 L814.67,150.72 L814.14,151.15 L813.60,151.57 L813.07,152.00 L812.54,152.42 L812.01,152.85 L811.48,153.28 L810.95,153.70 L810.42,154.13 L809.88,154.56 L809.35,154.99 L808.82,155.42 L808.29,155.85 L807.76,156.28 L807.23,156.71 L806.70,157.14 L806.17,157.57 L805.65,158.00 L805.12,158.44 L804.59,158.87 L804.06,159.30 L803.53,159.74 L803.00,160.17 L802.48,160.61 L801.95,161.04 L801.42,161.48 L800.90,161.91 L800.37,162.35 L799.84,162.78 L799.32,163.22 L798.79,163.66 L798.27,164.10 L797.74,164.53 L797.22,164.97 L796.69,165.41 L796.17,165.85 L795.65,166.29 L795.12,166.73 L794.60,167.17 L794.08,167.61 L793.56,168.05 L793.04,168.50 L792.52,168.94 L792.00,169.38 L791.48,169.82 L790.96,170.26 L790.44,170.71 L789.92,171.15 L789.40,171.60 L788.88,172.04 L788.36,172.48 L787.85,172.93 L787.33,173.37 L786.81,173.82 L786.30,174.27 L785.78,174.71 L785.27,175.16 L784.75,175.60 L784.24,176.05 L783.73,176.50 L783.21,176.95 L782.70,177.39 L782.19,177.84 L781.68,178.29 L781.17,178.74 L780.66,179.19 L780.15,179.64 L779.64,180.09 L779.13,180.54 L778.62,180.99 L778.11,181.44 L777.61,181.89 L777.10,182.34 L776.59,182.79 L776.09,183.24 L775.58,183.69 L775.08,184.15 L774.58,184.60 L774.07,185.05 L773.57,185.50 L773.07,185.96 L772.57,186.41 L772.07,186.86 L771.57,187.32 L771.07,187.77 L770.57,188.22 L770.07,188.68 L769.57,189.13 L769.08,189.59 L768.58,190.04 L768.09,190.50 L767.59,190.95 L767.10,191.41 L766.61,191.86 L766.11,192.32 L765.62,192.78 L765.13,193.23 L764.64,193.69 L764.15,194.15 L763.66,194.60 L763.17,195.06 L762.68,195.52 L762.20,195.98 L761.71,196.43 L761.23,196.89 L760.74,197.35 L760.26,197.81 L759.77,198.27 L759.29,198.73 L758.81,199.19 L758.33,199.65 L757.85,200.10 L757.37,200.56 L756.89,201.02 L756.41,201.48 L755.93,201.94 L755.46,202.40 L754.98,202.87 L754.51,203.33 L754.03,203.79 L753.56,204.25 L753.09,204.71 L752.62,205.17 L752.15,205.63 L751.68,206.09 L751.21,206.56 L750.74,207.02 L750.27,207.48 L749.80,207.94 L749.34,208.40 L748.87,208.87 L748.41,209.33 L747.95,209.79 L747.49,210.26 L747.02,210.72 L746.56,211.18 L746.10,211.65 L745.64,212.11 L745.19,212.57 L744.73,213.04 L744.27,213.50 L743.82,213.97 L743.36,214.43 L742.91,214.90 L742.46,215.36 L742.01,215.82 L741.56,216.29 L741.11,216.75 L740.66,217.22 L740.21,217.69 L739.76,218.15 L739.32,218.62 L738.87,219.08 L738.43,219.55 L737.99,220.01 L737.54,220.48 L737.10,220.95 L736.66,221.41 L736.22,221.88 L735.78,222.35 L735.35,222.81 L734.91,223.28 L734.48,223.75 L734.04,224.21 L733.61,224.68 L733.18,225.15 L732.74,225.62 L732.31,226.08 L731.89,226.55 L731.46,227.02 L731.03,227.49 L730.60,227.95 L730.18,228.42 L729.75,228.89 L729.33,229.36 L728.91,229.83 L728.49,230.30 L728.07,230.77 L727.65,231.23 L727.23,231.70 L726.81,232.17 L726.40,232.64 L725.98,233.11 L725.57,233.58 L725.16,234.05 L724.75,234.52 L724.34,234.99 L723.93,235.46 L723.52,235.93 L723.11,236.40 L722.70,236.87 L722.30,237.34 L721.90,237.81 L721.49,238.28 L721.09,238.75 L720.69,239.22 L720.29,239.69 L719.89,240.16 L719.50,240.63 L719.10,241.10" fill="none" stroke="#d81ef4" stroke-width="1.6" stroke-dasharray="1.5 2.18"/>
<path d="M878.60,116.40 L877.81,116.80 L877.02,117.20 L876.23,117.60 L875.44,118.02 L874.64,118.43 L873.85,118.85 L873.05,119.28 L872.26,119.71 L871.46,120.14 L870.66,120.58 L869.86,121.02 L869.06,121.47 L868.25,121.92 L867.45,122.38 L866.65,122.84 L865.84,123.30 L865.03,123.77 L864.22,124.24 L863.41,124.71 L862.60,125.19 L861.79,125.67 L860.98,126.16 L860.17,126.65 L859.35,127.14 L858.53,127.64 L857.72,128.14 L856.90,128.65 L856.08,129.15 L855.26,129.66 L854.44,130.18 L853.62,130.69 L852.79,131.21 L851.97,131.74 L851.15,132.26 L850.32,132.79 L849.49,133.33 L848.67,133.86 L847.84,134.40 L847.01,134.94 L846.18,135.48 L845.35,136.03 L844.52,136.58 L843.68,137.13 L842.85,137.69 L842.02,138.24 L841.18,138.80 L840.35,139.37 L839.51,139.93 L838.67,140.50 L837.84,141.07 L837.00,141.64 L836.16,142.21 L835.32,142.79 L834.49,143.37 L833.65,143.95 L832.81,144.53 L831.97,145.12 L831.12,145.71 L830.28,146.30 L829.44,146.89 L828.60,147.48 L827.76,148.08 L826.92,148.67 L826.07,149.27 L825.23,149.88 L824.39,150.48 L823.54,151.08 L822.70,151.69 L821.86,152.30 L821.01,152.91 L820.17,153.52 L819.33,154.14 L818.48,154.75 L817.64,155.37 L816.80,155.99 L815.95,156.61 L815.11,157.23 L814.26,157.86 L813.42,158.48 L812.58,159.11 L811.73,159.74 L810.89,160.37 L810.05,161.00 L809.21,161.63 L808.36,162.27 L807.52,162.90 L806.68,163.54 L805.84,164.18 L805.00,164.82 L804.16,165.46 L803.32,166.10 L802.48,166.75 L801.64,167.39 L800.80,168.04 L799.96,168.69 L799.12,169.33 L798.29,169.98 L797.45,170.63 L796.62,171.29 L795.78,171.94 L794.95,172.60 L794.11,173.25 L793.28,173.91 L792.45,174.57 L791.61,175.22 L790.78,175.88 L789.95,176.55 L789.12,177.21 L788.29,177.87 L787.47,178.53 L786.64,179.20 L785.81,179.87 L784.99,180.53 L784.16,181.20 L783.34,181.87 L782.52,182.54 L781.70,183.21 L780.88,183.88 L780.06,184.55 L779.24,185.23 L778.42,185.90 L777.61,186.58 L776.79,187.25 L775.98,187.93 L775.17,188.61 L774.36,189.28 L773.55,189.96 L772.74,190.64 L771.93,191.32 L771.13,192.00 L770.32,192.69 L769.52,193.37 L768.72,194.05 L767.92,194.74 L767.12,195.42 L766.32,196.11 L765.52,196.79 L764.73,197.48 L763.94,198.17 L763.14,198.86 L762.35,199.55 L761.56,200.24 L760.78,200.93 L759.99,201.62 L759.21,202.31 L758.43,203.00 L757.65,203.69 L756.87,204.39 L756.09,205.08 L755.31,205.78 L754.54,206.47 L753.77,207.17 L753.00,207.86 L752.23,208.56 L751.46,209.26 L750.70,209.96 L749.93,210.65 L749.17,211.35 L748.41,212.05 L747.65,212.75 L746.90,213.45 L746.15,214.15 L745.39,214.85 L744.64,215.56 L743.90,216.26 L743.15,216.96 L742.41,217.67 L741.66,218.37 L740.92,219.07 L740.19,219.78 L739.45,220.48 L738.72,221.19 L737.99,221.89 L737.26,222.60 L736.53,223.31 L735.80,224.02 L735.08,224.72 L734.36,225.43 L733.64,226.14 L732.93,226.85 L732.21,227.56 L731.50,228.27 L730.79,228.98 L730.09,229.69 L729.38,230.40 L728.68,231.11 L727.98,231.82 L727.28,232.53 L726.59,233.24 L725.89,233.96 L725.20,234.67 L724.51,235.38 L723.83,236.10 L723.15,236.81 L722.47,237.52 L721.79,238.24 L721.11,238.95 L720.44,239.67 L719.77,240.38 L719.10,241.10" fill="none" stroke="#d81ef4" stroke-width="1.6" stroke-dasharray="1.5 2.18"/>
<path d="M1037.50,132.40 L1035.30,131.19 L1033.10,129.99 L1030.90,128.80 L1028.70,127.61 L1026.51,126.43 L1024.32,125.25 L1022.13,124.08 L1019.94,122.92 L1017.76,121.77 L1015.58,120.62 L1013.41,119.48 L1011.24,118.35 L1009.08,117.23 L1006.92,116.12 L1004.77,115.02 L1002.63,113.93 L1000.50,112.84 L998.37,111.77 L996.25,110.71 L994.14,109.66 L992.04,108.62 L989.95,107.59 L987.87,106.58 L985.80,105.58 L983.74,104.59 L981.69,103.62 L979.66,102.66 L977.64,101.72 L975.63,100.80 L973.63,99.89 L971.65,98.99 L969.69,98.12 L967.74,97.26 L965.81,96.43 L963.89,95.61 L961.99,94.81 L960.10,94.04 L958.24,93.28 L956.39,92.55 L954.55,91.85 L952.74,91.16 L950.95,90.51 L949.17,89.88 L947.41,89.27 L945.68,88.70 L943.96,88.15 L942.26,87.63 L940.57,87.14 L938.91,86.68 L937.27,86.25 L935.64,85.86 L934.03,85.49 L932.44,85.16 L930.87,84.87 L929.31,84.61 L927.77,84.38 L926.24,84.19 L924.73,84.04 L923.23,83.92 L921.74,83.83 L920.27,83.79 L918.81,83.78 L917.36,83.80 L915.91,83.86 L914.48,83.96 L913.05,84.10 L911.64,84.27 L910.22,84.47 L908.81,84.71 L907.41,84.99 L906.00,85.30 L904.60,85.64 L903.21,86.02 L901.81,86.43 L900.41,86.87 L899.01,87.34 L897.61,87.84 L896.21,88.37 L894.80,88.93 L893.39,89.52 L891.98,90.14 L890.56,90.78 L889.14,91.45 L887.72,92.14 L886.29,92.86 L884.85,93.60 L883.41,94.36 L881.96,95.14 L880.51,95.95 L879.05,96.78 L877.59,97.62 L876.12,98.48 L874.64,99.37 L873.16,100.27 L871.68,101.18 L870.19,102.12 L868.69,103.07 L867.19,104.03 L865.68,105.01 L864.16,106.00 L862.65,107.01 L861.12,108.02 L859.59,109.06 L858.06,110.10 L856.52,111.15 L854.98,112.22 L853.44,113.30 L851.89,114.38 L850.34,115.48 L848.78,116.59 L847.22,117.70 L845.66,118.83 L844.10,119.96 L842.53,121.10 L840.96,122.25 L839.39,123.41 L837.81,124.57 L836.24,125.74 L834.66,126.92 L833.08,128.11 L831.50,129.30 L829.92,130.50 L828.34,131.70 L826.76,132.91 L825.18,134.12 L823.60,135.34 L822.02,136.57 L820.43,137.80 L818.85,139.03 L817.27,140.27 L815.69,141.52 L814.11,142.77 L812.53,144.02 L810.96,145.28 L809.38,146.54 L807.81,147.80 L806.24,149.07 L804.67,150.34 L803.10,151.62 L801.54,152.90 L799.97,154.18 L798.41,155.47 L796.86,156.76 L795.30,158.05 L793.75,159.34 L792.21,160.64 L790.66,161.94 L789.12,163.24 L787.59,164.55 L786.05,165.85 L784.52,167.16 L783.00,168.48 L781.48,169.79 L779.97,171.11 L778.46,172.43 L776.95,173.75 L775.45,175.07 L773.95,176.40 L772.46,177.72 L770.98,179.05 L769.50,180.38 L768.02,181.72 L766.55,183.05 L765.09,184.39 L763.63,185.72 L762.18,187.06 L760.74,188.40 L759.30,189.75 L757.87,191.09 L756.45,192.44 L755.03,193.78 L753.62,195.13 L752.21,196.48 L750.81,197.83 L749.42,199.18 L748.04,200.53 L746.66,201.89 L745.30,203.24 L743.94,204.60 L742.58,205.96 L741.24,207.32 L739.90,208.68 L738.57,210.04 L737.25,211.40 L735.94,212.76 L734.63,214.12 L733.34,215.49 L732.05,216.85 L730.77,218.22 L729.50,219.59 L728.24,220.96 L726.99,222.32 L725.74,223.69 L724.51,225.06 L723.28,226.43 L722.07,227.81 L720.86,229.18 L719.67,230.55 L718.48,231.93 L717.30,233.30" fill="none" stroke="#d81ef4" stroke-width="1.6" stroke-dasharray="1.5 2.18"/>
<path d="M1032.90,118.10 L1031.22,117.45 L1029.54,116.80 L1027.87,116.16 L1026.21,115.53 L1024.56,114.91 L1022.92,114.29 L1021.28,113.69 L1019.66,113.09 L1018.04,112.49 L1016.43,111.91 L1014.83,111.33 L1013.24,110.77 L1011.67,110.21 L1010.10,109.66 L1008.54,109.12 L1006.99,108.59 L1005.45,108.07 L1003.93,107.56 L1002.41,107.05 L1000.91,106.56 L999.41,106.08 L997.93,105.61 L996.46,105.15 L995.00,104.70 L993.56,104.26 L992.12,103.84 L990.70,103.42 L989.29,103.02 L987.89,102.62 L986.51,102.24 L985.13,101.87 L983.77,101.52 L982.42,101.17 L981.09,100.84 L979.77,100.53 L978.46,100.22 L977.16,99.93 L975.88,99.65 L974.61,99.39 L973.35,99.13 L972.11,98.90 L970.87,98.67 L969.65,98.46 L968.45,98.27 L967.25,98.09 L966.07,97.92 L964.90,97.77 L963.74,97.63 L962.60,97.51 L961.47,97.40 L960.35,97.30 L959.24,97.23 L958.14,97.16 L957.05,97.11 L955.98,97.08 L954.91,97.06 L953.86,97.06 L952.82,97.07 L951.79,97.09 L950.76,97.14 L949.75,97.19 L948.75,97.26 L947.76,97.35 L946.77,97.45 L945.80,97.57 L944.83,97.70 L943.87,97.84 L942.92,98.00 L941.98,98.18 L941.05,98.37 L940.12,98.57 L939.20,98.79 L938.29,99.02 L937.38,99.26 L936.48,99.52 L935.59,99.79 L934.70,100.08 L933.82,100.38 L932.94,100.69 L932.06,101.01 L931.20,101.35 L930.33,101.70 L929.47,102.06 L928.62,102.44 L927.77,102.82 L926.92,103.22 L926.08,103.63 L925.24,104.05 L924.40,104.49 L923.56,104.93 L922.73,105.39 L921.90,105.85 L921.08,106.33 L920.25,106.82 L919.43,107.31 L918.61,107.82 L917.79,108.34 L916.97,108.86 L916.16,109.40 L915.34,109.94 L914.53,110.50 L913.71,111.06 L912.90,111.63 L912.09,112.21 L911.28,112.80 L910.47,113.39 L909.67,114.00 L908.86,114.61 L908.05,115.23 L907.24,115.86 L906.44,116.49 L905.63,117.13 L904.82,117.78 L904.02,118.44 L903.21,119.10 L902.41,119.77 L901.60,120.45 L900.79,121.13 L899.99,121.82 L899.18,122.51 L898.38,123.21 L897.57,123.92 L896.76,124.63 L895.96,125.34 L895.15,126.07 L894.34,126.79 L893.53,127.53 L892.73,128.27 L891.92,129.01 L891.11,129.76 L890.30,130.51 L889.49,131.27 L888.68,132.03 L887.88,132.79 L887.07,133.56 L886.26,134.34 L885.45,135.12 L884.64,135.90 L883.82,136.69 L883.01,137.48 L882.20,138.27 L881.39,139.07 L880.58,139.87 L879.77,140.68 L878.96,141.48 L878.14,142.30 L877.33,143.11 L876.52,143.93 L875.71,144.75 L874.89,145.58 L874.08,146.41 L873.27,147.24 L872.46,148.07 L871.64,148.91 L870.83,149.75 L870.02,150.59 L869.20,151.44 L868.39,152.28 L867.58,153.13 L866.77,153.99 L865.95,154.84 L865.14,155.70 L864.33,156.56 L863.52,157.42 L862.71,158.29 L861.90,159.16 L861.09,160.02 L860.28,160.90 L859.47,161.77 L858.66,162.65 L857.85,163.52 L857.04,164.40 L856.23,165.28 L855.42,166.17 L854.62,167.05 L853.81,167.94 L853.00,168.83 L852.20,169.72 L851.39,170.61 L850.59,171.51 L849.79,172.40 L848.98,173.30 L848.18,174.20 L847.38,175.10 L846.58,176.00 L845.78,176.91 L844.98,177.81 L844.19,178.72 L843.39,179.63 L842.59,180.53 L841.80,181.45 L841.01,182.36 L840.21,183.27 L839.42,184.19 L838.63,185.10 L837.84,186.02 L837.06,186.94 L836.27,187.86 L835.48,188.78 L834.70,189.70" fill="none" stroke="#1ee878" stroke-width="1.6" stroke-dasharray="1.5 2.18"/>
<path d="M1030.50,130.90 L1029.22,130.62 L1027.95,130.35 L1026.69,130.09 L1025.43,129.83 L1024.19,129.58 L1022.95,129.35 L1021.73,129.12 L1020.51,128.90 L1019.30,128.68 L1018.10,128.48 L1016.91,128.29 L1015.73,128.10 L1014.55,127.92 L1013.39,127.75 L1012.23,127.59 L1011.08,127.44 L1009.94,127.30 L1008.81,127.17 L1007.69,127.05 L1006.58,126.93 L1005.48,126.83 L1004.38,126.73 L1003.29,126.64 L1002.22,126.57 L1001.14,126.50 L1000.08,126.44 L999.03,126.39 L997.98,126.35 L996.95,126.32 L995.92,126.29 L994.90,126.28 L993.88,126.28 L992.88,126.28 L991.88,126.30 L990.89,126.32 L989.90,126.36 L988.93,126.40 L987.96,126.45 L987.00,126.51 L986.05,126.58 L985.10,126.66 L984.16,126.75 L983.23,126.85 L982.30,126.96 L981.38,127.08 L980.47,127.20 L979.56,127.34 L978.66,127.48 L977.76,127.63 L976.88,127.80 L975.99,127.97 L975.12,128.15 L974.25,128.33 L973.38,128.53 L972.52,128.74 L971.66,128.95 L970.81,129.18 L969.97,129.41 L969.13,129.65 L968.29,129.90 L967.46,130.15 L966.64,130.42 L965.82,130.69 L965.00,130.97 L964.19,131.26 L963.38,131.56 L962.57,131.87 L961.77,132.18 L960.98,132.50 L960.18,132.83 L959.39,133.17 L958.61,133.51 L957.82,133.86 L957.04,134.22 L956.27,134.59 L955.50,134.96 L954.72,135.35 L953.96,135.73 L953.19,136.13 L952.43,136.53 L951.67,136.94 L950.91,137.36 L950.16,137.78 L949.41,138.21 L948.66,138.65 L947.91,139.09 L947.16,139.54 L946.42,139.99 L945.67,140.46 L944.93,140.92 L944.20,141.40 L943.46,141.88 L942.72,142.36 L941.99,142.86 L941.26,143.36 L940.53,143.86 L939.80,144.37 L939.07,144.88 L938.34,145.40 L937.61,145.93 L936.89,146.46 L936.17,147.00 L935.44,147.54 L934.72,148.09 L934.00,148.64 L933.28,149.20 L932.56,149.76 L931.84,150.33 L931.12,150.90 L930.41,151.47 L929.69,152.06 L928.97,152.64 L928.26,153.23 L927.54,153.83 L926.83,154.43 L926.11,155.03 L925.40,155.64 L924.69,156.25 L923.97,156.87 L923.26,157.49 L922.55,158.11 L921.84,158.74 L921.12,159.37 L920.41,160.01 L919.70,160.65 L918.99,161.29 L918.28,161.94 L917.57,162.59 L916.86,163.25 L916.15,163.90 L915.44,164.57 L914.73,165.23 L914.02,165.90 L913.31,166.57 L912.60,167.25 L911.89,167.93 L911.18,168.61 L910.47,169.29 L909.76,169.98 L909.05,170.67 L908.34,171.37 L907.63,172.06 L906.92,172.76 L906.21,173.46 L905.50,174.17 L904.79,174.88 L904.08,175.59 L903.37,176.30 L902.66,177.02 L901.95,177.74 L901.24,178.46 L900.53,179.18 L899.82,179.91 L899.11,180.64 L898.40,181.37 L897.69,182.11 L896.98,182.84 L896.27,183.58 L895.56,184.32 L894.85,185.06 L894.14,185.81 L893.43,186.56 L892.72,187.31 L892.01,188.06 L891.30,188.81 L890.59,189.57 L889.88,190.33 L889.18,191.09 L888.47,191.85 L887.76,192.61 L887.05,193.38 L886.34,194.15 L885.63,194.92 L884.92,195.69 L884.21,196.46 L883.51,197.23 L882.80,198.01 L882.09,198.79 L881.38,199.57 L880.68,200.35 L879.97,201.14 L879.26,201.92 L878.56,202.71 L877.85,203.49 L877.14,204.28 L876.44,205.08 L875.73,205.87 L875.03,206.66 L874.32,207.46 L873.62,208.26 L872.92,209.05 L872.21,209.85 L871.51,210.65 L870.81,211.46 L870.10,212.26 L869.40,213.07 L868.70,213.87 L868.00,214.68 L867.30,215.49 L866.60,216.30" fill="none" stroke="#1ee878" stroke-width="1.6" stroke-dasharray="1.5 2.18"/>
<path d="M976.80,126.80 L975.97,127.86 L975.16,128.93 L974.36,130.03 L973.56,131.15 L972.78,132.28 L972.00,133.44 L971.23,134.61 L970.47,135.80 L969.72,137.00 L968.97,138.22 L968.22,139.46 L967.48,140.71 L966.75,141.97 L966.02,143.25 L965.29,144.55 L964.56,145.85 L963.84,147.17 L963.12,148.50 L962.40,149.84 L961.69,151.20 L960.97,152.56 L960.26,153.94 L959.54,155.32 L958.83,156.72 L958.12,158.13 L957.40,159.54 L956.69,160.96 L955.98,162.40 L955.27,163.84 L954.55,165.29 L953.84,166.74 L953.12,168.21 L952.40,169.68 L951.69,171.16 L950.97,172.65 L950.25,174.14 L949.53,175.64 L948.80,177.14 L948.08,178.66 L947.35,180.17 L946.62,181.70 L945.89,183.23 L945.16,184.76 L944.43,186.30 L943.69,187.84 L942.95,189.39 L942.22,190.95 L941.47,192.51 L940.73,194.07 L939.99,195.64 L939.24,197.21 L938.49,198.79 L937.74,200.37 L936.98,201.95 L936.23,203.54 L935.47,205.13 L934.71,206.72 L933.95,208.32 L933.19,209.92 L932.42,211.53 L931.66,213.14 L930.89,214.75 L930.12,216.36 L929.34,217.98 L928.57,219.60 L927.79,221.22 L927.01,222.84 L926.24,224.47 L925.45,226.10 L924.67,227.73 L923.89,229.36 L923.10,231.00 L922.31,232.64 L921.52,234.28 L920.73,235.92 L919.94,237.57 L919.15,239.21 L918.36,240.86 L917.56,242.51 L916.76,244.16 L915.97,245.82 L915.17,247.47 L914.37,249.13 L913.57,250.79 L912.77,252.45 L911.96,254.11 L911.16,255.77 L910.36,257.43 L909.55,259.10 L908.75,260.76 L907.94,262.43 L907.14,264.10 L906.33,265.77 L905.52,267.44 L904.72,269.11 L903.91,270.79 L903.10,272.46 L902.30,274.14 L901.49,275.81 L900.68,277.49 L899.87,279.16 L899.07,280.84 L898.26,282.52 L897.46,284.20 L896.65,285.88 L895.84,287.56 L895.04,289.24 L894.23,290.93 L893.43,292.61 L892.63,294.29 L891.83,295.98 L891.02,297.66 L890.22,299.34 L889.42,301.03 L888.63,302.71 L887.83,304.40 L887.03,306.08 L886.24,307.77 L885.44,309.46 L884.65,311.14 L883.86,312.83 L883.07,314.52 L882.28,316.20 L881.50,317.89 L880.71,319.58 L879.93,321.26 L879.15,322.95 L878.37,324.64 L877.59,326.32 L876.82,328.01 L876.05,329.70 L875.28,331.38 L874.51,333.07 L873.74,334.76 L872.98,336.44 L872.21,338.13 L871.46,339.81 L870.70,341.50 L869.94,343.18 L869.19,344.86 L868.44,346.55 L867.70,348.23 L866.95,349.91 L866.21,351.59 L865.48,353.28 L864.74,354.96 L864.01,356.64 L863.28,358.32 L862.56,360.00 L861.83,361.67 L861.12,363.35 L860.40,365.03 L859.69,366.70 L858.98,368.38 L858.27,370.05 L857.57,371.72 L856.87,373.39 L856.18,375.07 L855.49,376.74 L854.80,378.40 L854.11,380.07 L853.43,381.74 L852.76,383.40 L852.08,385.07 L851.42,386.73 L850.75,388.39 L850.09,390.05 L849.43,391.71 L848.78,393.36 L848.13,395.02 L847.48,396.67 L846.84,398.32 L846.21,399.97 L845.57,401.62 L844.95,403.26 L844.32,404.91 L843.70,406.55 L843.08,408.19 L842.47,409.83 L841.86,411.46 L841.26,413.10 L840.66,414.73 L840.07,416.36 L839.48,417.98 L838.89,419.61 L838.31,421.23 L837.73,422.85 L837.16,424.46 L836.59,426.07 L836.02,427.68 L835.46,429.29 L834.91,430.90 L834.35,432.50 L833.80,434.09 L833.26,435.69 L832.72,437.28 L832.18,438.86 L831.65,440.45 L831.12,442.03 L830.60,443.60" fill="none" stroke="#6e6e6e" stroke-width="1.39" stroke-dasharray="1.39 2.29"/>
<path d="M976.8,126.8 L987.4,116.3" stroke="#9a9a9a" stroke-width="1.6"/>
<path d="M815.20,150.30 L822.60,144.70" stroke="#d81ef4" stroke-width="1.7"/>
<circle cx="822.60" cy="144.70" r="1.3" fill="#ff6a3a"/>
<path d="M878.60,116.40 L887.90,111.90" stroke="#d81ef4" stroke-width="1.7"/>
<circle cx="887.90" cy="111.90" r="1.3" fill="#ff6a3a"/>
<path d="M1037.50,132.40 L1065.00,147.30" stroke="#d81ef4" stroke-width="1.7"/>
<circle cx="1065.00" cy="147.30" r="1.3" fill="#ff6a3a"/>
<path d="M1032.90,118.10 L1074.90,135.00" stroke="#1ee878" stroke-width="1.7"/>
<circle cx="1074.90" cy="135.00" r="1.3" fill="#ff6a3a"/>
<path d="M1030.50,130.90 L1038.10,132.90" stroke="#1ee878" stroke-width="1.7"/>
<circle cx="1038.10" cy="132.90" r="1.3" fill="#ff6a3a"/>
<path d="M694.81,241.19 L695.19,240.36 L695.61,239.53 L696.06,238.71 L696.54,237.88 L697.05,237.06 L697.59,236.24 L698.17,235.42 L698.77,234.61 L699.40,233.81 L700.06,233.01 L700.74,232.22 L701.45,231.44 L702.18,230.67 L702.94,229.92 L703.72,229.17 L704.52,228.44 L705.34,227.72 L706.18,227.02 L707.04,226.34 L707.91,225.67 L708.80,225.02 L709.70,224.39 L710.61,223.77 L711.54,223.18 L712.47,222.61 L713.41,222.06 L714.36,221.54 L715.32,221.04 L716.27,220.56 L717.23,220.11 L718.19,219.69 L719.15,219.29 L720.11,218.92 L721.07,218.57 L722.02,218.26 L722.96,217.97 L723.90,217.71 L724.83,217.48 L725.75,217.29 L726.65,217.12 L727.55,216.98 L728.43,216.87 L729.30,216.79 L730.15,216.75 L730.99,216.73 L731.81,216.75 L732.61,216.79 L733.39,216.87 L734.15,216.98 L734.89,217.12 L735.60,217.29 L736.30,217.48 L736.97,217.71 L737.62,217.97 L738.24,218.26 L738.83,218.57 L739.41,218.92 L739.95,219.29 L740.47,219.69 L740.96,220.11 L741.42,220.56 L741.86,221.04 L742.26,221.54 L742.64,222.06 L742.99,222.61 L743.31,223.18 L743.60,223.77 L743.87,224.39 L744.10,225.02 L744.30,225.67 L744.48,226.34 L744.62,227.02 L744.74,227.72 L744.83,228.44 L744.88,229.17 L744.91,229.92 L744.91,230.67 L744.88,231.44 L744.83,232.22 L744.74,233.01 L744.62,233.81 L744.48,234.61 L744.31,235.42 L744.12,236.24 L743.89,237.06 L743.64,237.88 L743.36,238.71 L743.06,239.53 L742.73,240.36 L742.38,241.19 L742.00,242.01 L741.59,242.84 L741.17,243.65 L740.71,244.47 L740.24,245.28 L739.74,246.08 L739.23,246.87 L738.69,247.66 L738.12,248.44 L737.54,249.21 L736.94,249.96 L736.32,250.71 L735.68,251.44 L735.03,252.16 L734.35,252.86 L733.66,253.55 L732.95,254.23 L732.23,254.88 L731.50,255.52 L730.75,256.15 L729.98,256.75 L729.20,257.33 L728.42,257.90 L727.62,258.44 L726.81,258.96 L725.99,259.46 L725.16,259.94 L724.33,260.40 L723.48,260.83 L722.64,261.24 L721.78,261.62 L720.92,261.98 L720.06,262.31 L719.20,262.62 L718.33,262.91 L717.47,263.16 L716.60,263.39 L715.73,263.60 L714.87,263.78 L714.01,263.93 L713.15,264.05 L712.30,264.15 L711.45,264.21 L710.61,264.26 L709.78,264.27 L708.96,264.26 L708.15,264.21 L707.34,264.15 L706.55,264.05 L705.78,263.93 L705.01,263.78 L704.26,263.60 L703.53,263.39 L702.81,263.16 L702.11,262.91 L701.43,262.62 L700.77,262.31 L700.13,261.98 L699.51,261.62 L698.91,261.24 L698.34,260.83 L697.79,260.40 L697.27,259.94 L696.77,259.46 L696.30,258.96 L695.85,258.44 L695.44,257.90 L695.05,257.33 L694.69,256.75 L694.36,256.15 L694.07,255.52 L693.80,254.88 L693.57,254.23 L693.37,253.55 L693.20,252.86 L693.07,252.16 L692.97,251.44 L692.90,250.71 L692.87,249.96 L692.87,249.21 L692.91,248.44 L692.98,247.66 L693.09,246.87 L693.23,246.08 L693.41,245.28 L693.62,244.47 L693.87,243.65 L694.15,242.84 L694.46,242.01 L694.81,241.19" fill="none" stroke="#d81ef4" stroke-width="2.5"/>
<path d="M824.23,203.39 L824.42,202.57 L824.63,201.75 L824.88,200.93 L825.16,200.11 L825.47,199.29 L825.80,198.47 L826.17,197.65 L826.56,196.84 L826.98,196.04 L827.43,195.24 L827.90,194.45 L828.40,193.67 L828.93,192.89 L829.48,192.13 L830.05,191.38 L830.65,190.64 L831.27,189.92 L831.91,189.21 L832.57,188.51 L833.25,187.83 L833.94,187.17 L834.66,186.53 L835.39,185.91 L836.14,185.31 L836.90,184.73 L837.68,184.17 L838.47,183.63 L839.27,183.12 L840.08,182.63 L840.89,182.17 L841.72,181.73 L842.56,181.33 L843.39,180.94 L844.24,180.59 L845.09,180.27 L845.94,179.97 L846.79,179.71 L847.64,179.47 L848.49,179.27 L849.34,179.09 L850.19,178.95 L851.03,178.84 L851.87,178.76 L852.71,178.71 L853.53,178.69 L854.35,178.71 L855.16,178.76 L855.96,178.84 L856.75,178.95 L857.52,179.09 L858.29,179.27 L859.04,179.47 L859.77,179.71 L860.50,179.97 L861.20,180.27 L861.89,180.59 L862.56,180.94 L863.22,181.33 L863.85,181.73 L864.47,182.17 L865.06,182.63 L865.64,183.12 L866.19,183.63 L866.72,184.17 L867.23,184.73 L867.71,185.31 L868.18,185.91 L868.61,186.53 L869.03,187.17 L869.42,187.83 L869.78,188.51 L870.11,189.21 L870.43,189.92 L870.71,190.64 L870.97,191.38 L871.20,192.13 L871.40,192.89 L871.58,193.67 L871.73,194.45 L871.85,195.24 L871.94,196.04 L872.00,196.84 L872.04,197.65 L872.05,198.47 L872.03,199.29 L871.98,200.11 L871.90,200.93 L871.80,201.75 L871.67,202.57 L871.51,203.39 L871.32,204.21 L871.11,205.02 L870.87,205.83 L870.60,206.63 L870.31,207.43 L869.99,208.22 L869.64,209.00 L869.27,209.77 L868.87,210.54 L868.45,211.29 L868.01,212.03 L867.54,212.76 L867.05,213.47 L866.54,214.18 L866.00,214.86 L865.45,215.54 L864.87,216.19 L864.27,216.83 L863.66,217.45 L863.03,218.06 L862.37,218.64 L861.70,219.21 L861.02,219.76 L860.32,220.28 L859.60,220.79 L858.87,221.27 L858.13,221.73 L857.37,222.17 L856.61,222.59 L855.83,222.98 L855.04,223.35 L854.25,223.70 L853.45,224.02 L852.64,224.32 L851.82,224.59 L851.00,224.84 L850.17,225.06 L849.34,225.26 L848.51,225.43 L847.68,225.58 L846.85,225.69 L846.02,225.79 L845.19,225.85 L844.36,225.89 L843.53,225.91 L842.71,225.89 L841.90,225.85 L841.09,225.79 L840.29,225.69 L839.50,225.58 L838.72,225.43 L837.95,225.26 L837.19,225.06 L836.44,224.84 L835.71,224.59 L834.99,224.32 L834.28,224.02 L833.59,223.70 L832.92,223.35 L832.27,222.98 L831.63,222.59 L831.02,222.17 L830.42,221.73 L829.84,221.27 L829.29,220.79 L828.76,220.28 L828.25,219.76 L827.77,219.21 L827.31,218.64 L826.88,218.06 L826.47,217.45 L826.09,216.83 L825.74,216.19 L825.41,215.54 L825.11,214.86 L824.84,214.18 L824.60,213.47 L824.39,212.76 L824.21,212.03 L824.06,211.29 L823.94,210.54 L823.84,209.77 L823.78,209.00 L823.76,208.22 L823.76,207.43 L823.79,206.63 L823.85,205.83 L823.95,205.02 L824.07,204.21 L824.23,203.39" fill="none" stroke="#1ee878" stroke-width="2.5"/>
<g font-family="Liberation Sans, sans-serif" fill="#ffffff">
<text x="718.50" y="244.20" font-size="11.23" textLength="21.66" lengthAdjust="spacingAndGlyphs" text-anchor="middle">NTA</text><text x="847.70" y="206.00" font-size="11.23" textLength="23.34" lengthAdjust="spacingAndGlyphs" text-anchor="middle">AND</text>
</g>
<path d="M714.30,233.30 h6 M717.30,230.30 v6" stroke="#ff1a1a" stroke-width="1.3"/>
<path d="M716.10,241.10 h6 M719.10,238.10 v6" stroke="#ff1a1a" stroke-width="1.3"/>
<path d="M831.70,189.70 h6 M834.70,186.70 v6" stroke="#ff1a1a" stroke-width="1.3"/>
<path d="M863.60,216.30 h6 M866.60,213.30 v6" stroke="#ff1a1a" stroke-width="1.3"/>
<g font-family="Liberation Mono, monospace" font-size="13.9" fill="#ffffff" xml:space="preserve">
<text x="315.5" y="30.00">HR001P</text>
<text x="315.5" y="42.80">Beg: 20251115 16:59:00 (sol = 233.23°)</text>
<text x="315.5" y="56.70">End: 20251116 02:07:00 (sol = 233.61°)</text>
<text x="315.5" y="68.60">--------------------------------------</text>
<text x="315.5" y="81.90">NTA: 3</text>
<text x="315.5" y="94.70">...: 2</text>
<text x="315.5" y="107.80">AND: 2</text>
</g>
<g stroke="#666666" stroke-width="2.08" stroke-dasharray="2.08 3.44">
<path d="M73.90,642.40 V842.40"/>
<path d="M217.80,642.40 V842.40"/>
<path d="M364.80,642.40 V842.40"/>
<path d="M504.70,642.40 V842.40"/>
<path d="M650.00,642.40 V842.40"/>
<path d="M796.60,642.40 V842.40"/>
<path d="M939.60,642.40 V842.40"/>
<path d="M1090.70,642.40 V842.40"/>
<path d="M1239.20,642.40 V842.40"/>
<path d="M1393.90,642.40 V842.40"/>
<path d="M1548.00,642.40 V842.40"/>
<path d="M1687.30,642.40 V842.40"/>
</g>
<g font-family="Liberation Sans, sans-serif" font-size="30.0" fill="#555555">
<text transform="translate(148.90,696.85) rotate(-90) scale(0.8782,1)" x="0" y="0">APR</text>
<text transform="translate(294.00,701.25) rotate(-90) scale(0.8725,1)" x="0" y="0">MAY</text>
<text transform="translate(436.10,691.00) rotate(-90) scale(0.8572,1)" x="0" y="0">JUN</text>
<text transform="translate(576.10,685.89) rotate(-90) scale(0.8384,1)" x="0" y="0">JUL</text>
<text transform="translate(722.80,700.35) rotate(-90) scale(0.8866,1)" x="0" y="0">AUG</text>
<text transform="translate(871.80,694.45) rotate(-90) scale(0.8444,1)" x="0" y="0">SEP</text>
<text transform="translate(1015.80,700.79) rotate(-90) scale(0.9083,1)" x="0" y="0">OCT</text>
<text transform="translate(1168.80,704.44) rotate(-90) scale(0.9100,1)" x="0" y="0">NOV</text>
<text transform="translate(1317.80,700.46) rotate(-90) scale(0.8789,1)" x="0" y="0">DEC</text>
<text transform="translate(1468.90,689.00) rotate(-90) scale(0.8464,1)" x="0" y="0">JAN</text>
<text transform="translate(1627.80,696.11) rotate(-90) scale(0.8582,1)" x="0" y="0">FEB</text>
<text transform="translate(1765.90,705.24) rotate(-90) scale(0.9106,1)" x="0" y="0">MAR</text>
</g>
<g stroke-width="4"><path d="M106.00,834.00 H128.70" stroke="#ee82ee"/><path d="M165.00,834.00 H344.70" stroke="#ee82ee"/><path d="M365.70,834.00 H624.70" stroke="#ee82ee"/><path d="M635.00,834.00 H785.70" stroke="#ee82ee"/><path d="M807.00,834.00 H898.70" stroke="#ee82ee"/><path d="M920.00,834.00 H972.70" stroke="#ee82ee"/><path d="M984.00,834.00 H1065.70" stroke="#ee82ee"/><path d="M1082.00,834.00 H1202.70" stroke="#ee82ee"/><path d="M1244.00,834.00 H1325.70" stroke="#ee82ee"/><path d="M1337.30,834.00 H1354.30" stroke="#ee82ee"/><path d="M1381.00,834.00 H1443.70" stroke="#ee82ee"/><path d="M1459.00,834.00 H1511.70" stroke="#ee82ee"/><path d="M1523.00,834.00 H1547.00" stroke="#ee82ee"/><path d="M1724.00,834.00 H1747.75" stroke="#ee82ee"/><path d="M1758.00,834.00 H1781.75" stroke="#ee82ee"/><path d="M165.00,818.00 H187.70" stroke="#dd22ee"/><path d="M223.00,818.00 H285.70" stroke="#dd22ee"/><path d="M312.00,818.00 H340.00" stroke="#dd22ee"/><path d="M365.70,818.00 H492.00" stroke="#dd22ee"/><path d="M508.30,818.00 H653.70" stroke="#dd22ee"/><path d="M704.00,818.00 H736.70" stroke="#dd22ee"/><path d="M773.00,818.00 H844.70" stroke="#dd22ee"/><path d="M871.00,818.00 H987.70" stroke="#dd22ee"/><path d="M1003.00,818.00 H1016.70" stroke="#dd22ee"/><path d="M1062.00,818.00 H1212.70" stroke="#dd22ee"/><path d="M1244.00,818.00 H1266.70" stroke="#dd22ee"/><path d="M1293.00,818.00 H1315.70" stroke="#dd22ee"/><path d="M1342.00,818.00 H1364.70" stroke="#dd22ee"/><path d="M1386.00,818.00 H1428.70" stroke="#dd22ee"/><path d="M1459.00,818.00 H1482.70" stroke="#dd22ee"/><path d="M1548.00,818.00 H1571.00" stroke="#dd22ee"/><path d="M165.00,802.00 H187.70" stroke="#ff2200"/><path d="M258.00,802.00 H487.00" stroke="#ff2200"/><path d="M508.30,802.00 H615.00" stroke="#ff2200"/><path d="M626.00,802.00 H717.70" stroke="#ff2200"/><path d="M729.00,802.00 H825.70" stroke="#ff2200"/><path d="M949.00,802.00 H1148.70" stroke="#ff2200"/><path d="M1160.00,802.00 H1247.70" stroke="#ff2200"/><path d="M1258.00,802.00 H1443.70" stroke="#ff2200"/><path d="M1459.00,802.00 H1482.70" stroke="#ff2200"/><path d="M1552.00,802.00 H1576.00" stroke="#ff2200"/><path d="M194.00,785.30 H218.00" stroke="#ffaa11"/><path d="M321.00,785.30 H506.70" stroke="#ffaa11"/><path d="M518.00,785.30 H540.70" stroke="#ffaa11"/><path d="M557.00,785.30 H682.70" stroke="#ffaa11"/><path d="M807.00,785.30 H830.70" stroke="#ffaa11"/><path d="M954.00,785.30 H972.70" stroke="#ffaa11"/><path d="M987.70,785.30 H1125.00" stroke="#ffaa11"/><path d="M1155.00,785.30 H1217.70" stroke="#ffaa11"/><path d="M1244.00,785.30 H1266.70" stroke="#ffaa11"/><path d="M1317.00,785.30 H1340.70" stroke="#ffaa11"/><path d="M1396.00,785.30 H1418.70" stroke="#ffaa11"/><path d="M1464.00,785.30 H1650.00" stroke="#ffaa11"/><path d="M341.00,769.00 H369.70" stroke="#ffee00"/><path d="M410.00,769.00 H447.70" stroke="#ffee00"/><path d="M469.00,769.00 H491.70" stroke="#ffee00"/><path d="M527.00,769.00 H545.70" stroke="#ffee00"/><path d="M562.00,769.00 H589.70" stroke="#ffee00"/><path d="M616.00,769.00 H648.70" stroke="#ffee00"/><path d="M959.00,769.00 H987.70" stroke="#ffee00"/><path d="M1062.00,769.00 H1085.70" stroke="#ffee00"/><path d="M1101.00,769.00 H1124.70" stroke="#ffee00"/><path d="M1160.00,769.00 H1193.70" stroke="#ffee00"/><path d="M1248.00,769.00 H1271.70" stroke="#ffee00"/><path d="M1425.00,769.00 H1512.00" stroke="#ffee00"/><path d="M420.00,752.30 H442.70" stroke="#aaee22"/><path d="M532.00,752.30 H555.70" stroke="#aaee22"/><path d="M567.00,752.30 H589.70" stroke="#aaee22"/><path d="M621.00,752.30 H741.70" stroke="#aaee22"/><path d="M969.00,752.30 H1134.70" stroke="#aaee22"/><path d="M1185.00,752.30 H1345.70" stroke="#aaee22"/><path d="M1469.00,752.30 H1492.70" stroke="#aaee22"/><path d="M429.00,736.00 H452.70" stroke="#55cc00"/><path d="M576.00,736.00 H732.70" stroke="#55cc00"/><path d="M992.70,736.00 H1104.70" stroke="#55cc00"/><path d="M1116.00,736.00 H1222.70" stroke="#55cc00"/><path d="M1263.00,736.00 H1291.70" stroke="#55cc00"/><path d="M1489.00,736.00 H1511.70" stroke="#55cc00"/><path d="M591.00,720.00 H615.00" stroke="#00f07a"/><path d="M655.00,720.00 H771.70" stroke="#00f07a"/><path d="M1072.00,720.00 H1242.70" stroke="#00f07a"/><path d="M1263.00,720.00 H1286.70" stroke="#00f07a"/><path d="M596.00,703.00 H732.70" stroke="#00dcff"/><path d="M1091.00,703.00 H1119.70" stroke="#00dcff"/><path d="M1199.00,703.00 H1222.70" stroke="#00dcff"/><path d="M1273.00,703.00 H1325.70" stroke="#00dcff"/><path d="M1111.00,687.00 H1134.70" stroke="#0f1fdc"/></g>
<path d="M112.70,834.00 h8 M116.70,830.00 v8 M241.00,834.00 h8 M245.00,830.00 v8 M511.00,834.00 h8 M515.00,830.00 v8 M706.70,834.00 h8 M710.70,830.00 v8 M832.70,834.00 h8 M836.70,830.00 v8 M962.00,834.00 h8 M966.00,830.00 v8 M985.30,834.00 h8 M989.30,830.00 v8 M1116.00,834.00 h8 M1120.00,830.00 v8 M1295.00,834.00 h8 M1299.00,830.00 v8 M1341.00,834.00 h8 M1345.00,830.00 v8 M1412.30,834.00 h8 M1416.30,830.00 v8 M1481.30,834.00 h8 M1485.30,830.00 v8 M1531.00,834.00 h8 M1535.00,830.00 v8 M1732.00,834.00 h8 M1736.00,830.00 v8 M1766.00,834.00 h8 M1770.00,830.00 v8 M171.70,818.00 h8 M175.70,814.00 v8 M256.00,818.00 h8 M260.00,814.00 v8 M322.70,818.00 h8 M326.70,814.00 v8 M436.70,818.00 h8 M440.70,814.00 v8 M598.70,818.00 h8 M602.70,814.00 v8 M716.70,818.00 h8 M720.70,814.00 v8 M792.70,818.00 h8 M796.70,814.00 v8 M938.70,818.00 h8 M942.70,814.00 v8 M1005.30,818.00 h8 M1009.30,814.00 v8 M1152.70,818.00 h8 M1156.70,814.00 v8 M1251.00,818.00 h8 M1255.00,814.00 v8 M1299.70,818.00 h8 M1303.70,814.00 v8 M1349.00,818.00 h8 M1353.00,814.00 v8 M1402.30,818.00 h8 M1406.30,814.00 v8 M1466.30,818.00 h8 M1470.30,814.00 v8 M1555.00,818.00 h8 M1559.00,814.00 v8 M173.70,802.00 h8 M177.70,798.00 v8 M377.70,802.00 h8 M381.70,798.00 v8 M544.70,802.00 h8 M548.70,798.00 v8 M681.70,802.00 h8 M685.70,798.00 v8 M740.70,802.00 h8 M744.70,798.00 v8 M1074.50,802.00 h8 M1078.50,798.00 v8 M1216.70,802.00 h8 M1220.70,798.00 v8 M1304.70,802.00 h8 M1308.70,798.00 v8 M1466.30,802.00 h8 M1470.30,798.00 v8 M1559.50,802.00 h8 M1563.50,798.00 v8 M201.70,785.30 h8 M205.70,781.30 v8 M399.30,785.30 h8 M403.30,781.30 v8 M525.00,785.30 h8 M529.00,781.30 v8 M638.70,785.30 h8 M642.70,781.30 v8 M814.70,785.30 h8 M818.70,781.30 v8 M958.70,785.30 h8 M962.70,781.30 v8 M1039.50,785.30 h8 M1043.50,781.30 v8 M1187.70,785.30 h8 M1191.70,781.30 v8 M1251.00,785.30 h8 M1255.00,781.30 v8 M1324.70,785.30 h8 M1328.70,781.30 v8 M1402.30,785.30 h8 M1406.30,781.30 v8 M1545.50,785.30 h8 M1549.50,781.30 v8 M355.30,769.00 h8 M359.30,765.00 v8 M425.70,769.00 h8 M429.70,765.00 v8 M475.30,769.00 h8 M479.30,765.00 v8 M534.30,769.00 h8 M538.30,765.00 v8 M571.00,769.00 h8 M575.00,765.00 v8 M630.30,769.00 h8 M634.30,765.00 v8 M973.70,769.00 h8 M977.70,765.00 v8 M1069.30,769.00 h8 M1073.30,765.00 v8 M1108.70,769.00 h8 M1112.70,765.00 v8 M1177.70,769.00 h8 M1181.70,765.00 v8 M1255.30,769.00 h8 M1259.30,765.00 v8 M1466.50,769.00 h8 M1470.50,765.00 v8 M426.70,752.30 h8 M430.70,748.30 v8 M539.30,752.30 h8 M543.30,748.30 v8 M573.70,752.30 h8 M577.70,748.30 v8 M704.00,752.30 h8 M708.00,748.30 v8 M1093.00,752.30 h8 M1097.00,748.30 v8 M1270.30,752.30 h8 M1274.30,748.30 v8 M1476.30,752.30 h8 M1480.30,748.30 v8 M436.70,736.00 h8 M440.70,732.00 v8 M630.30,736.00 h8 M634.30,732.00 v8 M1038.70,736.00 h8 M1042.70,732.00 v8 M1167.70,736.00 h8 M1171.70,732.00 v8 M1275.00,736.00 h8 M1279.00,732.00 v8 M1496.30,736.00 h8 M1500.30,732.00 v8 M598.70,720.00 h8 M602.70,716.00 v8 M726.70,720.00 h8 M730.70,716.00 v8 M1187.70,720.00 h8 M1191.70,716.00 v8 M1270.30,720.00 h8 M1274.30,716.00 v8 M686.70,703.00 h8 M690.70,699.00 v8 M1101.70,703.00 h8 M1105.70,699.00 v8 M1206.70,703.00 h8 M1210.70,699.00 v8 M1299.70,703.00 h8 M1303.70,699.00 v8 M1118.70,687.00 h8 M1122.70,683.00 v8" stroke="#ffffff" stroke-width="2.5"/>
<g font-family="Liberation Sans, sans-serif" fill="#ffffff"><text x="117.35" y="831.40" font-size="11.13" textLength="20.18" lengthAdjust="spacingAndGlyphs" text-anchor="middle">KSE</text><text x="254.85" y="831.40" font-size="11.13" textLength="20.23" lengthAdjust="spacingAndGlyphs" text-anchor="middle">ETA</text><text x="495.20" y="831.40" font-size="11.13" textLength="22.38" lengthAdjust="spacingAndGlyphs" text-anchor="middle">NZC</text><text x="710.35" y="831.40" font-size="11.13" textLength="23.12" lengthAdjust="spacingAndGlyphs" text-anchor="middle">NDA</text><text x="852.85" y="831.40" font-size="11.13" textLength="19.63" lengthAdjust="spacingAndGlyphs" text-anchor="middle">SPE</text><text x="946.35" y="831.40" font-size="11.13" textLength="22.56" lengthAdjust="spacingAndGlyphs" text-anchor="middle">ARD</text><text x="1024.85" y="831.40" font-size="11.13" textLength="21.41" lengthAdjust="spacingAndGlyphs" text-anchor="middle">EGE</text><text x="1142.35" y="831.40" font-size="11.13" textLength="21.45" lengthAdjust="spacingAndGlyphs" text-anchor="middle">NTA</text><text x="1284.85" y="831.40" font-size="11.13" textLength="25.18" lengthAdjust="spacingAndGlyphs" text-anchor="middle">MON</text><text x="1345.80" y="831.40" font-size="11.13" textLength="21.65" lengthAdjust="spacingAndGlyphs" text-anchor="middle">URS</text><text x="1412.35" y="831.40" font-size="11.13" textLength="21.49" lengthAdjust="spacingAndGlyphs" text-anchor="middle">AHY</text><text x="1485.35" y="831.40" font-size="11.13" textLength="24.88" lengthAdjust="spacingAndGlyphs" text-anchor="middle">GUM</text><text x="1535.00" y="831.40" font-size="11.13" textLength="22.57" lengthAdjust="spacingAndGlyphs" text-anchor="middle">QHY</text><text x="1735.88" y="831.40" font-size="11.13" textLength="21.72" lengthAdjust="spacingAndGlyphs" text-anchor="middle">XHE</text><text x="1769.88" y="831.40" font-size="11.13" textLength="16.91" lengthAdjust="spacingAndGlyphs" text-anchor="middle">EVI</text><text x="176.35" y="814.80" font-size="11.13" textLength="21.57" lengthAdjust="spacingAndGlyphs" text-anchor="middle">AVB</text><text x="254.35" y="814.80" font-size="11.13" textLength="18.90" lengthAdjust="spacingAndGlyphs" text-anchor="middle">ELY</text><text x="326.00" y="814.80" font-size="11.13" textLength="23.57" lengthAdjust="spacingAndGlyphs" text-anchor="middle">CAM</text><text x="428.85" y="814.80" font-size="11.13" textLength="21.47" lengthAdjust="spacingAndGlyphs" text-anchor="middle">SSG</text><text x="581.00" y="814.80" font-size="11.13" textLength="20.85" lengthAdjust="spacingAndGlyphs" text-anchor="middle">PCA</text><text x="720.35" y="814.80" font-size="11.13" textLength="22.95" lengthAdjust="spacingAndGlyphs" text-anchor="middle">AUD</text><text x="808.85" y="814.80" font-size="11.13" textLength="22.16" lengthAdjust="spacingAndGlyphs" text-anchor="middle">AUR</text><text x="929.35" y="814.80" font-size="11.13" textLength="21.94" lengthAdjust="spacingAndGlyphs" text-anchor="middle">DSX</text><text x="1009.85" y="814.80" font-size="11.13" textLength="23.28" lengthAdjust="spacingAndGlyphs" text-anchor="middle">OCU</text><text x="1137.35" y="814.80" font-size="11.13" textLength="22.19" lengthAdjust="spacingAndGlyphs" text-anchor="middle">OER</text><text x="1255.35" y="814.80" font-size="11.13" textLength="23.06" lengthAdjust="spacingAndGlyphs" text-anchor="middle">DKD</text><text x="1304.35" y="814.80" font-size="11.13" textLength="21.93" lengthAdjust="spacingAndGlyphs" text-anchor="middle">DSV</text><text x="1353.35" y="814.80" font-size="11.13" textLength="19.45" lengthAdjust="spacingAndGlyphs" text-anchor="middle">ALY</text><text x="1407.35" y="814.80" font-size="11.13" textLength="15.58" lengthAdjust="spacingAndGlyphs" text-anchor="middle">JLE</text><text x="1470.85" y="814.80" font-size="11.13" textLength="21.33" lengthAdjust="spacingAndGlyphs" text-anchor="middle">SCC</text><text x="1559.50" y="814.80" font-size="11.13" textLength="19.86" lengthAdjust="spacingAndGlyphs" text-anchor="middle">FEV</text><text x="176.35" y="798.80" font-size="11.13" textLength="19.56" lengthAdjust="spacingAndGlyphs" text-anchor="middle">LYR</text><text x="372.50" y="798.80" font-size="11.13" textLength="19.49" lengthAdjust="spacingAndGlyphs" text-anchor="middle">JMC</text><text x="561.65" y="798.80" font-size="11.13" textLength="16.06" lengthAdjust="spacingAndGlyphs" text-anchor="middle">JPE</text><text x="671.85" y="798.80" font-size="11.13" textLength="21.20" lengthAdjust="spacingAndGlyphs" text-anchor="middle">PAU</text><text x="777.35" y="798.80" font-size="11.13" textLength="18.13" lengthAdjust="spacingAndGlyphs" text-anchor="middle">NIA</text><text x="1048.85" y="798.80" font-size="11.13" textLength="20.26" lengthAdjust="spacingAndGlyphs" text-anchor="middle">STA</text><text x="1203.85" y="798.80" font-size="11.13" textLength="24.38" lengthAdjust="spacingAndGlyphs" text-anchor="middle">NOO</text><text x="1350.85" y="798.80" font-size="11.13" textLength="24.66" lengthAdjust="spacingAndGlyphs" text-anchor="middle">COM</text><text x="1470.85" y="798.80" font-size="11.13" textLength="22.52" lengthAdjust="spacingAndGlyphs" text-anchor="middle">NCC</text><text x="1564.00" y="798.80" font-size="11.13" textLength="20.76" lengthAdjust="spacingAndGlyphs" text-anchor="middle">FED</text><text x="206.00" y="782.10" font-size="11.13" textLength="18.18" lengthAdjust="spacingAndGlyphs" text-anchor="middle">HVI</text><text x="413.85" y="782.10" font-size="11.13" textLength="17.58" lengthAdjust="spacingAndGlyphs" text-anchor="middle">ARI</text><text x="529.35" y="782.10" font-size="11.13" textLength="21.19" lengthAdjust="spacingAndGlyphs" text-anchor="middle">SZC</text><text x="619.85" y="782.10" font-size="11.13" textLength="20.85" lengthAdjust="spacingAndGlyphs" text-anchor="middle">CAP</text><text x="818.85" y="782.10" font-size="11.13" textLength="22.17" lengthAdjust="spacingAndGlyphs" text-anchor="middle">NUE</text><text x="963.35" y="782.10" font-size="11.13" textLength="22.01" lengthAdjust="spacingAndGlyphs" text-anchor="middle">OCT</text><text x="1056.35" y="782.10" font-size="11.13" textLength="18.66" lengthAdjust="spacingAndGlyphs" text-anchor="middle">ORI</text><text x="1186.35" y="782.10" font-size="11.13" textLength="24.51" lengthAdjust="spacingAndGlyphs" text-anchor="middle">AMO</text><text x="1255.35" y="782.10" font-size="11.13" textLength="21.75" lengthAdjust="spacingAndGlyphs" text-anchor="middle">DPC</text><text x="1328.85" y="782.10" font-size="11.13" textLength="17.47" lengthAdjust="spacingAndGlyphs" text-anchor="middle">XVI</text><text x="1407.35" y="782.10" font-size="11.13" textLength="23.13" lengthAdjust="spacingAndGlyphs" text-anchor="middle">QUA</text><text x="1557.00" y="782.10" font-size="11.13" textLength="22.22" lengthAdjust="spacingAndGlyphs" text-anchor="middle">AAN</text><text x="355.35" y="765.80" font-size="11.13" textLength="21.49" lengthAdjust="spacingAndGlyphs" text-anchor="middle">TAH</text><text x="428.85" y="765.80" font-size="11.13" textLength="16.91" lengthAdjust="spacingAndGlyphs" text-anchor="middle">JEA</text><text x="480.35" y="765.80" font-size="11.13" textLength="12.53" lengthAdjust="spacingAndGlyphs" text-anchor="middle">JIP</text><text x="536.35" y="765.80" font-size="11.13" textLength="19.33" lengthAdjust="spacingAndGlyphs" text-anchor="middle">PPS</text><text x="575.85" y="765.80" font-size="11.13" textLength="21.19" lengthAdjust="spacingAndGlyphs" text-anchor="middle">ZCS</text><text x="632.35" y="765.80" font-size="11.13" textLength="23.52" lengthAdjust="spacingAndGlyphs" text-anchor="middle">GDR</text><text x="973.35" y="765.80" font-size="11.13" textLength="22.56" lengthAdjust="spacingAndGlyphs" text-anchor="middle">DRA</text><text x="1073.85" y="765.80" font-size="11.13" textLength="22.59" lengthAdjust="spacingAndGlyphs" text-anchor="middle">LUM</text><text x="1112.85" y="765.80" font-size="11.13" textLength="21.31" lengthAdjust="spacingAndGlyphs" text-anchor="middle">RPU</text><text x="1176.85" y="765.80" font-size="11.13" textLength="21.49" lengthAdjust="spacingAndGlyphs" text-anchor="middle">THA</text><text x="1259.85" y="765.80" font-size="11.13" textLength="20.68" lengthAdjust="spacingAndGlyphs" text-anchor="middle">PSU</text><text x="1468.50" y="765.80" font-size="11.13" textLength="21.73" lengthAdjust="spacingAndGlyphs" text-anchor="middle">XCB</text><text x="431.35" y="749.10" font-size="11.13" textLength="17.72" lengthAdjust="spacingAndGlyphs" text-anchor="middle">IRC</text><text x="543.85" y="749.10" font-size="11.13" textLength="22.37" lengthAdjust="spacingAndGlyphs" text-anchor="middle">CAN</text><text x="578.35" y="749.10" font-size="11.13" textLength="21.08" lengthAdjust="spacingAndGlyphs" text-anchor="middle">FAN</text><text x="681.35" y="749.10" font-size="11.13" textLength="20.26" lengthAdjust="spacingAndGlyphs" text-anchor="middle">PER</text><text x="1051.85" y="749.10" font-size="11.13" textLength="20.93" lengthAdjust="spacingAndGlyphs" text-anchor="middle">CTA</text><text x="1265.35" y="749.10" font-size="11.13" textLength="22.39" lengthAdjust="spacingAndGlyphs" text-anchor="middle">HYD</text><text x="1480.85" y="749.10" font-size="11.13" textLength="23.94" lengthAdjust="spacingAndGlyphs" text-anchor="middle">XUM</text><text x="440.85" y="732.80" font-size="11.13" textLength="22.89" lengthAdjust="spacingAndGlyphs" text-anchor="middle">COR</text><text x="654.35" y="732.80" font-size="11.13" textLength="21.93" lengthAdjust="spacingAndGlyphs" text-anchor="middle">SDA</text><text x="1048.70" y="732.80" font-size="11.13" textLength="18.01" lengthAdjust="spacingAndGlyphs" text-anchor="middle">LMI</text><text x="1169.35" y="732.80" font-size="11.13" textLength="20.75" lengthAdjust="spacingAndGlyphs" text-anchor="middle">LEO</text><text x="1277.35" y="732.80" font-size="11.13" textLength="20.94" lengthAdjust="spacingAndGlyphs" text-anchor="middle">EHY</text><text x="1500.35" y="732.80" font-size="11.13" textLength="21.15" lengthAdjust="spacingAndGlyphs" text-anchor="middle">ECV</text><text x="603.00" y="716.80" font-size="11.13" textLength="17.47" lengthAdjust="spacingAndGlyphs" text-anchor="middle">JXA</text><text x="713.35" y="716.80" font-size="11.13" textLength="22.35" lengthAdjust="spacingAndGlyphs" text-anchor="middle">KCG</text><text x="1157.35" y="716.80" font-size="11.13" textLength="23.12" lengthAdjust="spacingAndGlyphs" text-anchor="middle">AND</text><text x="1274.85" y="716.80" font-size="11.13" textLength="23.35" lengthAdjust="spacingAndGlyphs" text-anchor="middle">DAD</text><text x="664.35" y="699.80" font-size="11.13" textLength="17.03" lengthAdjust="spacingAndGlyphs" text-anchor="middle">ERI</text><text x="1105.35" y="699.80" font-size="11.13" textLength="20.60" lengthAdjust="spacingAndGlyphs" text-anchor="middle">SLD</text><text x="1210.85" y="699.80" font-size="11.13" textLength="22.23" lengthAdjust="spacingAndGlyphs" text-anchor="middle">ORS</text><text x="1299.35" y="699.80" font-size="11.13" textLength="23.83" lengthAdjust="spacingAndGlyphs" text-anchor="middle">GEM</text><text x="1122.85" y="683.80" font-size="11.13" textLength="23.63" lengthAdjust="spacingAndGlyphs" text-anchor="middle">KUM</text></g>
<path d="M1163.40,641.40 V842.40" stroke="#ff0000" stroke-width="1.39" stroke-dasharray="5.14 2.22"/>
<path d="M1165.30,641.40 V842.40" stroke="#ff0000" stroke-width="1.39" stroke-dasharray="5.14 2.22"/>
<rect x="19.20" y="641.40" width="1766.30" height="201.00" fill="none" stroke="#ffffff" stroke-width="1.11"/>
<path d="M19.20,842.40 v4.86 M264.50,842.40 v4.86 M509.80,842.40 v4.86 M755.10,842.40 v4.86 M1000.40,842.40 v4.86 M1245.70,842.40 v4.86 M1491.00,842.40 v4.86 M1736.30,842.40 v4.86" stroke="#ffffff" stroke-width="1.11"/>
<g font-family="Liberation Sans, sans-serif" fill="#ffffff"><text x="19.20" y="862.20" font-size="14.72" textLength="8.84" lengthAdjust="spacingAndGlyphs" text-anchor="middle">0</text><text x="264.50" y="862.20" font-size="14.72" textLength="17.67" lengthAdjust="spacingAndGlyphs" text-anchor="middle">50</text><text x="509.80" y="862.20" font-size="14.72" textLength="26.51" lengthAdjust="spacingAndGlyphs" text-anchor="middle">100</text><text x="755.10" y="862.20" font-size="14.72" textLength="26.51" lengthAdjust="spacingAndGlyphs" text-anchor="middle">150</text><text x="1000.40" y="862.20" font-size="14.72" textLength="26.51" lengthAdjust="spacingAndGlyphs" text-anchor="middle">200</text><text x="1245.70" y="862.20" font-size="14.72" textLength="26.51" lengthAdjust="spacingAndGlyphs" text-anchor="middle">250</text><text x="1491.00" y="862.20" font-size="14.72" textLength="26.51" lengthAdjust="spacingAndGlyphs" text-anchor="middle">300</text><text x="1736.30" y="862.20" font-size="14.72" textLength="26.51" lengthAdjust="spacingAndGlyphs" text-anchor="middle">350</text><text x="902.20" y="882.20" font-size="14.72" textLength="146.69" lengthAdjust="spacingAndGlyphs" text-anchor="middle">Solar longitude (deg)</text></g>
</svg></body></html>
